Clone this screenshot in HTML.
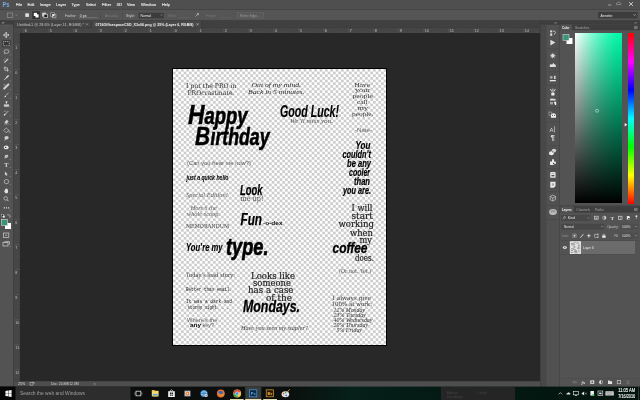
<!DOCTYPE html>
<html lang="en">
<head>
<meta charset="utf-8">
<title>Photoshop - Officespace printables</title>
<style>

html,body{margin:0;padding:0;background:#282828;}
body{width:640px;height:400px;overflow:hidden;font-family:'Liberation Sans',sans-serif;}
#app{position:relative;width:640px;height:400px;overflow:hidden;background:#282828;}
svg{position:absolute;left:0;top:0;overflow:visible;will-change:transform;}
#app div{position:absolute;box-sizing:border-box;}
svg text{white-space:pre;}
#menubar{left:0;top:0;width:640px;height:9px;background:#4f4f4f;}
#optbar{left:0;top:9px;width:640px;height:12px;background:#555555;box-shadow:inset 0 1px 0 #454545, inset 0 -1px 0 #414141;}
#tools{left:0;top:21px;width:14px;height:366px;background:#535353;box-shadow:inset -1px 0 0 #404040;}
#tabs{left:14px;top:21px;width:526px;height:7px;background:#424242;}
#hruler{left:14px;top:28px;width:526px;height:5px;background:#484848;}
#vruler{left:14px;top:33px;width:6px;height:348px;background:#484848;}
#canvas{left:20px;top:33px;width:520px;height:348px;background:#282828;}
#doc{left:172px;top:68px;width:215px;height:278px;background:#000;}
#status{left:14px;top:381px;width:526px;height:6px;background:#4e4e4e;}
#dock{left:540px;top:21px;width:20px;height:366px;background:#535353;}
#panels{left:560px;top:21px;width:80px;height:366px;background:#535353;}
#picker{left:15px;top:12px;width:47px;height:170px;background:linear-gradient(to bottom,rgba(0,0,0,0.000) 0.0%,rgba(0,0,0,0.081) 8.3%,rgba(0,0,0,0.162) 16.7%,rgba(0,0,0,0.243) 25.0%,rgba(0,0,0,0.325) 33.3%,rgba(0,0,0,0.407) 41.7%,rgba(0,0,0,0.489) 50.0%,rgba(0,0,0,0.572) 58.3%,rgba(0,0,0,0.655) 66.7%,rgba(0,0,0,0.739) 75.0%,rgba(0,0,0,0.824) 83.3%,rgba(0,0,0,0.910) 91.7%,rgba(0,0,0,1.000) 100.0%),linear-gradient(to right,rgb(255,255,255) 0.0%,rgb(224,254,244) 8.3%,rgb(194,254,234) 16.7%,rgb(166,253,225) 25.0%,rgb(139,253,215) 33.3%,rgb(114,252,207) 41.7%,rgb(90,252,199) 50.0%,rgb(69,251,191) 58.3%,rgb(49,251,185) 66.7%,rgb(32,251,179) 75.0%,rgb(17,250,174) 83.3%,rgb(6,250,170) 91.7%,rgb(0,250,168) 100.0%);}
#huebar{left:68px;top:12px;width:6.4px;height:170.5px;background:linear-gradient(to bottom,#f00 0%,#f0f 16.67%,#00f 33.33%,#0ff 50%,#0f0 66.67%,#ff0 83.33%,#f00 100%);}
#taskbar{left:0;top:387px;width:640px;height:13px;background:#0d0d0d;}

</style>
</head>
<body>
<div id="app">
<div id="menubar"><svg width="640" height="9" viewBox="0 0 640 9"><text x="2.50" y="7.00" font-size="7" font-family="'Liberation Sans', sans-serif" fill="#74a9dd" font-weight="bold" font-style="normal" textLength="7.00" lengthAdjust="spacingAndGlyphs">Ps</text><text x="16.00" y="6.20" font-size="4.4" font-family="'Liberation Sans', sans-serif" fill="#f0f0f0" font-weight="normal" font-style="normal" textLength="6.20" lengthAdjust="spacingAndGlyphs" stroke="#f0f0f0" stroke-width="0.1">File</text><text x="27.50" y="6.20" font-size="4.4" font-family="'Liberation Sans', sans-serif" fill="#f0f0f0" font-weight="normal" font-style="normal" textLength="7.00" lengthAdjust="spacingAndGlyphs" stroke="#f0f0f0" stroke-width="0.1">Edit</text><text x="40.00" y="6.20" font-size="4.4" font-family="'Liberation Sans', sans-serif" fill="#f0f0f0" font-weight="normal" font-style="normal" textLength="10.50" lengthAdjust="spacingAndGlyphs" stroke="#f0f0f0" stroke-width="0.1">Image</text><text x="56.00" y="6.20" font-size="4.4" font-family="'Liberation Sans', sans-serif" fill="#f0f0f0" font-weight="normal" font-style="normal" textLength="10.00" lengthAdjust="spacingAndGlyphs" stroke="#f0f0f0" stroke-width="0.1">Layer</text><text x="71.50" y="6.20" font-size="4.4" font-family="'Liberation Sans', sans-serif" fill="#f0f0f0" font-weight="normal" font-style="normal" textLength="8.00" lengthAdjust="spacingAndGlyphs" stroke="#f0f0f0" stroke-width="0.1">Type</text><text x="86.00" y="6.20" font-size="4.4" font-family="'Liberation Sans', sans-serif" fill="#f0f0f0" font-weight="normal" font-style="normal" textLength="10.00" lengthAdjust="spacingAndGlyphs" stroke="#f0f0f0" stroke-width="0.1">Select</text><text x="102.00" y="6.20" font-size="4.4" font-family="'Liberation Sans', sans-serif" fill="#f0f0f0" font-weight="normal" font-style="normal" textLength="9.00" lengthAdjust="spacingAndGlyphs" stroke="#f0f0f0" stroke-width="0.1">Filter</text><text x="116.50" y="6.20" font-size="4.4" font-family="'Liberation Sans', sans-serif" fill="#f0f0f0" font-weight="normal" font-style="normal" textLength="5.50" lengthAdjust="spacingAndGlyphs" stroke="#f0f0f0" stroke-width="0.1">3D</text><text x="127.00" y="6.20" font-size="4.4" font-family="'Liberation Sans', sans-serif" fill="#f0f0f0" font-weight="normal" font-style="normal" textLength="8.00" lengthAdjust="spacingAndGlyphs" stroke="#f0f0f0" stroke-width="0.1">View</text><text x="141.00" y="6.20" font-size="4.4" font-family="'Liberation Sans', sans-serif" fill="#f0f0f0" font-weight="normal" font-style="normal" textLength="15.00" lengthAdjust="spacingAndGlyphs" stroke="#f0f0f0" stroke-width="0.1">Window</text><text x="162.00" y="6.20" font-size="4.4" font-family="'Liberation Sans', sans-serif" fill="#f0f0f0" font-weight="normal" font-style="normal" textLength="8.00" lengthAdjust="spacingAndGlyphs" stroke="#f0f0f0" stroke-width="0.1">Help</text><rect x="608" y="4.6" width="3.4" height="0.8" fill="#b0b0b0"/><path d="M616.4 4.6 l4.4 0 q0.6 -1.4 -0.8 -1.8 q-0.8 -1.4 -2.2 -0.4 q-1.4 0.2 -1.4 2.2z" fill="none" stroke="#a8a8a8" stroke-width="0.6"/><path d="M629 2 l4 4 m0 -4 l-4 4" stroke="#ddd" stroke-width="0.8" fill="none"/></svg></div>
<div id="optbar"><svg width="640" height="12" viewBox="0 9 640 12"><rect x="7.2" y="13" width="5.6" height="4.4" fill="none" stroke="#a8a8a8" stroke-width="0.5"/><path d="M15.3 14.6 l1 1 l1 -1" stroke="#aaa" stroke-width="0.5" fill="none"/><rect x="25.3" y="13.3" width="3.6" height="3.6" fill="#e2e2e2"/><rect x="32.3" y="11.3" width="7.6" height="7.6" fill="#2e2e2e"/><rect x="33.8" y="12.8" width="3.2" height="3.2" fill="#fff"/><rect x="35.4" y="14.3" width="3.2" height="3.2" fill="#fff"/><rect x="42.2" y="12.7" width="3.8" height="3.8" fill="#dadada"/><rect x="43.9" y="14.2" width="3.5" height="3.5" fill="#1c1c1c" stroke="#d4d4d4" stroke-width="0.7"/><rect x="50.8" y="12.8" width="3.5" height="3.5" fill="#3a3a3a" stroke="#c8c8c8" stroke-width="0.6"/><rect x="52.4" y="14.3" width="3.5" height="3.5" fill="#3a3a3a" stroke="#c8c8c8" stroke-width="0.6"/><rect x="52.4" y="14.3" width="2.1" height="2.1" fill="#f4f4f4"/><text x="65.00" y="16.60" font-size="4.3" font-family="'Liberation Sans', sans-serif" fill="#d0d0d0" font-weight="normal" font-style="normal" textLength="11.50" lengthAdjust="spacingAndGlyphs">Feather:</text><rect x="79" y="17.6" width="18.5" height="0.45" fill="#9a9a9a"/><rect x="100.5" y="11.5" width="0.4" height="8" fill="#474747"/><rect x="122" y="11.5" width="0.4" height="8" fill="#474747"/><text x="79.80" y="16.60" font-size="4.3" font-family="'Liberation Sans', sans-serif" fill="#e0e0e0" font-weight="normal" font-style="normal" textLength="6.70" lengthAdjust="spacingAndGlyphs">0 px</text><text x="105.00" y="16.60" font-size="4.3" font-family="'Liberation Sans', sans-serif" fill="#7d7d7d" font-weight="normal" font-style="normal" textLength="13.00" lengthAdjust="spacingAndGlyphs">Anti-alias</text><text x="126.00" y="16.60" font-size="4.3" font-family="'Liberation Sans', sans-serif" fill="#d0d0d0" font-weight="normal" font-style="normal" textLength="9.00" lengthAdjust="spacingAndGlyphs">Style:</text><rect x="138.6" y="12.8" width="25.2" height="5.6" fill="#3c3c3c"/><text x="140.50" y="16.60" font-size="4.3" font-family="'Liberation Sans', sans-serif" fill="#f0f0f0" font-weight="normal" font-style="normal" textLength="10.70" lengthAdjust="spacingAndGlyphs">Normal</text><path d="M160.5 14.6 l1 1 l1 -1" stroke="#aaa" stroke-width="0.5" fill="none"/><text x="168.00" y="16.60" font-size="4.3" font-family="'Liberation Sans', sans-serif" fill="#777" font-weight="normal" font-style="normal" textLength="8.50" lengthAdjust="spacingAndGlyphs">Width:</text><rect x="178" y="17.6" width="12" height="0.5" fill="#666"/><path d="M195.5 16.5 l3 -3 m-0.2 1.8 l0.2 -1.8 l-1.8 0.2" stroke="#ccc" stroke-width="0.6" fill="none"/><text x="206.00" y="16.60" font-size="4.3" font-family="'Liberation Sans', sans-serif" fill="#777" font-weight="normal" font-style="normal" textLength="11.00" lengthAdjust="spacingAndGlyphs">Height:</text><rect x="219" y="17.6" width="12" height="0.5" fill="#666"/><rect x="237.5" y="12.6" width="26" height="5.4" fill="#585858" stroke="#6a6a6a" stroke-width="0.5"/><text x="240.00" y="16.60" font-size="4.2" font-family="'Liberation Sans', sans-serif" fill="#9a9a9a" font-weight="normal" font-style="normal" textLength="19.50" lengthAdjust="spacingAndGlyphs">Refine Edge...</text><rect x="598" y="12" width="39.5" height="6.4" fill="#3d3d3d"/><text x="600.50" y="16.60" font-size="4.3" font-family="'Liberation Sans', sans-serif" fill="#e8e8e8" font-weight="normal" font-style="normal" textLength="12.00" lengthAdjust="spacingAndGlyphs">Annette</text><path d="M633.5 14.3 l1.1 1.2 l1.1 -1.2" stroke="#ccc" stroke-width="0.6" fill="none"/></svg></div>
<div id="tools"><svg width="14" height="366" viewBox="0 21 14 366"><rect x="0" y="21" width="14" height="3.5" fill="#3e3e3e"/><path d="M2 22 l0.8 0.8 l-0.8 0.8 M3.3 22 l0.8 0.8 l-0.8 0.8" stroke="#d8d8d8" stroke-width="0.5" fill="none"/><rect x="3" y="25.6" width="7" height="0.4" fill="#666"/><g transform="translate(6.3 35) scale(0.82) translate(-6.3 -35)"><path d="M6.2 32 l0 6 M3.2 35 l6 0 M6.2 31.6 l-1 1.3 l2 0 z M6.2 38.4 l-1 -1.3 l2 0 z M2.8 35 l1.3 -1 l0 2 z M9.6 35 l-1.3 -1 l0 2 z" stroke="#cfcfcf" stroke-width="0.8" fill="#cfcfcf"/></g><path d="M10.5 38.3 l0 -1 l-1 1 z" fill="#b4b4b4"/><rect x="2" y="40.2" width="8.8" height="7" rx="0.5" fill="#363636"/><rect x="3.3" y="41.6" width="6" height="4.2" fill="none" stroke="#e4e4e4" stroke-width="0.6" stroke-dasharray="1.2 0.6"/><path d="M10.5 46.8 l0 -1 l-1 1 z" fill="#b4b4b4"/><g transform="translate(6.3 52) scale(0.82) translate(-6.3 -52)"><ellipse cx="6.6" cy="51.4" rx="3" ry="2.2" fill="none" stroke="#cfcfcf" stroke-width="0.8"/><path d="M4.6 53 l-0.6 1.8" stroke="#cfcfcf" stroke-width="0.8"/></g><path d="M10.5 55.3 l0 -1 l-1 1 z" fill="#b4b4b4"/><g transform="translate(6.3 60.5) scale(0.82) translate(-6.3 -60.5)"><path d="M4 63 l4.6 -4.6" stroke="#cfcfcf" stroke-width="1.3"/><ellipse cx="5" cy="59.6" rx="1.8" ry="1.6" fill="none" stroke="#cfcfcf" stroke-width="0.5" stroke-dasharray="0.8 0.5"/></g><path d="M10.5 63.8 l0 -1 l-1 1 z" fill="#b4b4b4"/><g transform="translate(6.3 69) scale(0.82) translate(-6.3 -69)"><path d="M4.6 66 l0 4.6 l4.8 0 M3 67.6 l4.8 0 l0 4.6" stroke="#cfcfcf" stroke-width="0.9" fill="none"/></g><path d="M10.5 72.3 l0 -1 l-1 1 z" fill="#b4b4b4"/><g transform="translate(6.3 78) scale(0.82) translate(-6.3 -78)"><path d="M3.6 80.6 l3.2 -3.2" stroke="#cfcfcf" stroke-width="1.1"/><path d="M6.6 77.4 l2 -2" stroke="#cfcfcf" stroke-width="1.9" stroke-linecap="round"/></g><path d="M10.5 81.3 l0 -1 l-1 1 z" fill="#b4b4b4"/><g transform="translate(6.3 86.5) scale(0.82) translate(-6.3 -86.5)"><path d="M3.8 89 l5 -5" stroke="#cfcfcf" stroke-width="2.5" stroke-linecap="round"/><circle cx="4" cy="84.6" r="0.9" fill="none" stroke="#cfcfcf" stroke-width="0.4"/></g><path d="M10.5 89.8 l0 -1 l-1 1 z" fill="#b4b4b4"/><g transform="translate(6.3 95.5) scale(0.82) translate(-6.3 -95.5)"><path d="M6 95.4 l3 -3.2" stroke="#cfcfcf" stroke-width="0.9"/><path d="M3.8 98 q0.4 -2.2 2.2 -2.4 q0.8 1.6 -2.2 2.4z" fill="#f0f0f0"/></g><path d="M10.5 98.8 l0 -1 l-1 1 z" fill="#b4b4b4"/><g transform="translate(6.3 104) scale(0.82) translate(-6.3 -104)"><path d="M6.5 101 l0 3 M3.6 105 l5.8 0 l0 1 l-5.8 0z M3.6 107 l5.8 0" stroke="#cfcfcf" stroke-width="0.9" fill="#cfcfcf"/><circle cx="6.5" cy="101.6" r="1.2" fill="#cfcfcf"/></g><path d="M10.5 107.3 l0 -1 l-1 1 z" fill="#b4b4b4"/><g transform="translate(6.3 113) scale(0.82) translate(-6.3 -113)"><path d="M4 115.6 l4.8 -5" stroke="#cfcfcf" stroke-width="1"/><path d="M3.4 111.4 q1.4 -1.6 3 -0.6" stroke="#cfcfcf" stroke-width="0.6" fill="none"/><path d="M3.6 116 l1.4 -1.6" stroke="#f0f0f0" stroke-width="1.4"/></g><path d="M10.5 116.3 l0 -1 l-1 1 z" fill="#b4b4b4"/><g transform="translate(6.3 121.5) scale(0.82) translate(-6.3 -121.5)"><path d="M4 122.4 l3 -3 l2.2 2.2 l-3 3 z" fill="#cfcfcf"/><path d="M3.4 124.6 l6 0" stroke="#cfcfcf" stroke-width="0.6"/></g><path d="M10.5 124.8 l0 -1 l-1 1 z" fill="#b4b4b4"/><g transform="translate(6.3 130) scale(0.82) translate(-6.3 -130)"><path d="M3.2 130.4 l3 -3 l3 3 l-3 3 z" fill="none" stroke="#cfcfcf" stroke-width="0.8"/><path d="M8.8 130 q1.6 1.6 1 3.2" stroke="#cfcfcf" stroke-width="0.9" fill="none"/></g><path d="M10.5 133.3 l0 -1 l-1 1 z" fill="#b4b4b4"/><g transform="translate(6.3 138.5) scale(0.82) translate(-6.3 -138.5)"><ellipse cx="6.6" cy="137.6" rx="2.6" ry="2" fill="#cfcfcf"/><path d="M4.4 141 l1.4 -2.4" stroke="#cfcfcf" stroke-width="1.1"/></g><path d="M10.5 141.8 l0 -1 l-1 1 z" fill="#b4b4b4"/><g transform="translate(6.3 147.5) scale(0.82) translate(-6.3 -147.5)"><ellipse cx="6.2" cy="147.4" rx="3" ry="2.3" fill="#e4e4e4"/><circle cx="5.6" cy="147.4" r="0.8" fill="#222"/></g><path d="M10.5 150.8 l0 -1 l-1 1 z" fill="#b4b4b4"/><g transform="translate(6.3 156.5) scale(0.82) translate(-6.3 -156.5)"><path d="M4.2 159 l0.4 -3.4 q1.6 -2 3.6 -1 l0.6 1.6 q-1 2 -4.6 2.8z" fill="#cfcfcf"/><path d="M5.2 158 q1 -1.6 2.4 -2" stroke="#555" stroke-width="0.4" fill="none"/></g><path d="M10.5 159.8 l0 -1 l-1 1 z" fill="#b4b4b4"/><text x="4.30" y="166.80" font-size="6.6" font-family="'Liberation Serif', serif" fill="#dcdcdc" font-weight="bold" font-style="normal" textLength="4.20" lengthAdjust="spacingAndGlyphs">T</text><path d="M10.5 167.8 l0 -1 l-1 1 z" fill="#b4b4b4"/><g transform="translate(6.3 173.5) scale(0.82) translate(-6.3 -173.5)"><path d="M4.6 171 l3.6 3.4 l-1.6 0.2 l0.8 1.6 l-0.8 0.4 l-0.8 -1.6 l-1.2 1 z" fill="#cfcfcf"/></g><path d="M10.5 176.8 l0 -1 l-1 1 z" fill="#b4b4b4"/><g transform="translate(6.3 181.5) scale(0.82) translate(-6.3 -181.5)"><ellipse cx="6.5" cy="181.6" rx="2.8" ry="2.6" fill="none" stroke="#cfcfcf" stroke-width="0.8"/></g><path d="M10.5 184.8 l0 -1 l-1 1 z" fill="#b4b4b4"/><g transform="translate(6.3 190.5) scale(0.82) translate(-6.3 -190.5)"><path d="M4.4 192.6 l-1 -1.8 l1 -0.4 l0.4 0.6 l0 -2.4 l0.9 0 l0 -0.6 l0.9 0 l0 0.5 l0.9 0 l0 0.7 l0.9 0 l0 3.4 l-0.8 1.4 l-2.6 0 z" fill="#e0e0e0"/></g><path d="M10.5 193.8 l0 -1 l-1 1 z" fill="#b4b4b4"/><g transform="translate(6.3 199.3) scale(0.82) translate(-6.3 -199.3)"><circle cx="5.6" cy="198.2" r="2.2" fill="none" stroke="#cfcfcf" stroke-width="0.8"/><path d="M7.2 199.8 l1.8 1.8" stroke="#cfcfcf" stroke-width="1.1"/></g><rect x="3.8" y="207.2" width="1.2" height="1.3" fill="#cfcfcf"/><rect x="5.9" y="207.2" width="1.2" height="1.3" fill="#cfcfcf"/><rect x="8" y="207.2" width="1.2" height="1.3" fill="#cfcfcf"/><path d="M10.5 210.8 l0 -1 l-1 1 z" fill="#b4b4b4"/><rect x="1.6" y="214.4" width="2.2" height="2.2" fill="#111" stroke="#ddd" stroke-width="0.4"/><rect x="2.8" y="215.6" width="2" height="2" fill="#eee"/><path d="M7.6 214.8 l2.4 0 l0 2.4 M10 217.4 l-0.8 -0.8 m0.8 0.8 l0.8 -0.8 M7.4 214.8 l0.8 -0.8 m-0.8 0.8 l0.8 0.8" stroke="#ccc" stroke-width="0.45" fill="none"/><rect x="5" y="223" width="6" height="6" fill="#ffffff"/><rect x="1.5" y="219.5" width="6" height="6" fill="#38957a" stroke="#d8d8d8" stroke-width="0.6"/><rect x="3.4" y="233" width="5.4" height="4.4" fill="none" stroke="#cfcfcf" stroke-width="0.7"/><rect x="5" y="234.3" width="2.2" height="1.8" fill="#888"/><rect x="3" y="242.6" width="5" height="3.4" fill="none" stroke="#cfcfcf" stroke-width="0.7"/><path d="M4.4 241.6 l5 0 l0 3.2" stroke="#cfcfcf" stroke-width="0.7" fill="none"/><path d="M10.5 246.8 l0 -1 l-1 1 z" fill="#b4b4b4"/></svg></div>
<div id="tabs"><svg width="526" height="7" viewBox="14 21 526 7"><rect x="14" y="21" width="526" height="7" fill="#404040"/><rect x="14" y="21" width="77.5" height="6.6" fill="#444444"/><rect x="91.5" y="21" width="0.6" height="7" fill="#333"/><rect x="92" y="21" width="109.5" height="7" fill="#484848"/><rect x="201.5" y="21" width="0.6" height="7" fill="#333"/><text x="17.00" y="25.50" font-size="4.2" font-family="'Liberation Sans', sans-serif" fill="#c4c4c4" font-weight="normal" font-style="normal" textLength="67.00" lengthAdjust="spacingAndGlyphs">Untitled-1 @ 28.6% (Layer 11, RGB/8) *</text><path d="M86 23.3 l2 2 m0 -2 l-2 2" stroke="#b0b0b0" stroke-width="0.5" fill="none"/><text x="95.50" y="25.60" font-size="4.2" font-family="'Liberation Sans', sans-serif" fill="#f2f2f2" font-weight="bold" font-style="normal" textLength="98.00" lengthAdjust="spacingAndGlyphs">0716OfficespaceCSD_X3x06.png @ 25% (Layer 6, RGB/8)</text><path d="M196.5 23.3 l2 2 m0 -2 l-2 2" stroke="#ddd" stroke-width="0.5" fill="none"/></svg></div>
<div id="hruler"><svg width="526" height="5" viewBox="14 28 526 5"><rect x="14" y="28" width="526" height="5" fill="#464646"/><rect x="14" y="27.6" width="526" height="0.5" fill="#3e3e3e"/><rect x="14" y="28" width="6" height="5" fill="#494949"/><rect x="23.75" y="28.3" width="0.4" height="4.7" fill="#6c6c6c"/><rect x="36.25" y="31.4" width="0.35" height="1.6" fill="#6c6c6c"/><rect x="30.00" y="32.2" width="0.3" height="0.8" fill="#626262"/><rect x="42.50" y="32.2" width="0.3" height="0.8" fill="#626262"/><rect x="26.88" y="32.4" width="0.3" height="0.6" fill="#585858"/><rect x="33.12" y="32.4" width="0.3" height="0.6" fill="#585858"/><rect x="39.38" y="32.4" width="0.3" height="0.6" fill="#585858"/><rect x="45.62" y="32.4" width="0.3" height="0.6" fill="#585858"/><text x="24.75" y="32.20" font-size="4.1" font-family="'Liberation Sans', sans-serif" fill="#c0c0c0" font-weight="normal" font-style="normal" textLength="2.10" lengthAdjust="spacingAndGlyphs">6</text><rect x="48.75" y="28.3" width="0.4" height="4.7" fill="#6c6c6c"/><rect x="61.25" y="31.4" width="0.35" height="1.6" fill="#6c6c6c"/><rect x="55.00" y="32.2" width="0.3" height="0.8" fill="#626262"/><rect x="67.50" y="32.2" width="0.3" height="0.8" fill="#626262"/><rect x="51.88" y="32.4" width="0.3" height="0.6" fill="#585858"/><rect x="58.12" y="32.4" width="0.3" height="0.6" fill="#585858"/><rect x="64.38" y="32.4" width="0.3" height="0.6" fill="#585858"/><rect x="70.62" y="32.4" width="0.3" height="0.6" fill="#585858"/><text x="49.75" y="32.20" font-size="4.1" font-family="'Liberation Sans', sans-serif" fill="#c0c0c0" font-weight="normal" font-style="normal" textLength="2.10" lengthAdjust="spacingAndGlyphs">5</text><rect x="73.75" y="28.3" width="0.4" height="4.7" fill="#6c6c6c"/><rect x="86.25" y="31.4" width="0.35" height="1.6" fill="#6c6c6c"/><rect x="80.00" y="32.2" width="0.3" height="0.8" fill="#626262"/><rect x="92.50" y="32.2" width="0.3" height="0.8" fill="#626262"/><rect x="76.88" y="32.4" width="0.3" height="0.6" fill="#585858"/><rect x="83.12" y="32.4" width="0.3" height="0.6" fill="#585858"/><rect x="89.38" y="32.4" width="0.3" height="0.6" fill="#585858"/><rect x="95.62" y="32.4" width="0.3" height="0.6" fill="#585858"/><text x="74.75" y="32.20" font-size="4.1" font-family="'Liberation Sans', sans-serif" fill="#c0c0c0" font-weight="normal" font-style="normal" textLength="2.10" lengthAdjust="spacingAndGlyphs">4</text><rect x="98.75" y="28.3" width="0.4" height="4.7" fill="#6c6c6c"/><rect x="111.25" y="31.4" width="0.35" height="1.6" fill="#6c6c6c"/><rect x="105.00" y="32.2" width="0.3" height="0.8" fill="#626262"/><rect x="117.50" y="32.2" width="0.3" height="0.8" fill="#626262"/><rect x="101.88" y="32.4" width="0.3" height="0.6" fill="#585858"/><rect x="108.12" y="32.4" width="0.3" height="0.6" fill="#585858"/><rect x="114.38" y="32.4" width="0.3" height="0.6" fill="#585858"/><rect x="120.62" y="32.4" width="0.3" height="0.6" fill="#585858"/><text x="99.75" y="32.20" font-size="4.1" font-family="'Liberation Sans', sans-serif" fill="#c0c0c0" font-weight="normal" font-style="normal" textLength="2.10" lengthAdjust="spacingAndGlyphs">3</text><rect x="123.75" y="28.3" width="0.4" height="4.7" fill="#6c6c6c"/><rect x="136.25" y="31.4" width="0.35" height="1.6" fill="#6c6c6c"/><rect x="130.00" y="32.2" width="0.3" height="0.8" fill="#626262"/><rect x="142.50" y="32.2" width="0.3" height="0.8" fill="#626262"/><rect x="126.88" y="32.4" width="0.3" height="0.6" fill="#585858"/><rect x="133.12" y="32.4" width="0.3" height="0.6" fill="#585858"/><rect x="139.38" y="32.4" width="0.3" height="0.6" fill="#585858"/><rect x="145.62" y="32.4" width="0.3" height="0.6" fill="#585858"/><text x="124.75" y="32.20" font-size="4.1" font-family="'Liberation Sans', sans-serif" fill="#c0c0c0" font-weight="normal" font-style="normal" textLength="2.10" lengthAdjust="spacingAndGlyphs">2</text><rect x="148.75" y="28.3" width="0.4" height="4.7" fill="#6c6c6c"/><rect x="161.25" y="31.4" width="0.35" height="1.6" fill="#6c6c6c"/><rect x="155.00" y="32.2" width="0.3" height="0.8" fill="#626262"/><rect x="167.50" y="32.2" width="0.3" height="0.8" fill="#626262"/><rect x="151.88" y="32.4" width="0.3" height="0.6" fill="#585858"/><rect x="158.12" y="32.4" width="0.3" height="0.6" fill="#585858"/><rect x="164.38" y="32.4" width="0.3" height="0.6" fill="#585858"/><rect x="170.62" y="32.4" width="0.3" height="0.6" fill="#585858"/><text x="149.75" y="32.20" font-size="4.1" font-family="'Liberation Sans', sans-serif" fill="#c0c0c0" font-weight="normal" font-style="normal" textLength="2.10" lengthAdjust="spacingAndGlyphs">1</text><rect x="173.75" y="28.3" width="0.4" height="4.7" fill="#6c6c6c"/><rect x="186.25" y="31.4" width="0.35" height="1.6" fill="#6c6c6c"/><rect x="180.00" y="32.2" width="0.3" height="0.8" fill="#626262"/><rect x="192.50" y="32.2" width="0.3" height="0.8" fill="#626262"/><rect x="176.88" y="32.4" width="0.3" height="0.6" fill="#585858"/><rect x="183.12" y="32.4" width="0.3" height="0.6" fill="#585858"/><rect x="189.38" y="32.4" width="0.3" height="0.6" fill="#585858"/><rect x="195.62" y="32.4" width="0.3" height="0.6" fill="#585858"/><text x="174.75" y="32.20" font-size="4.1" font-family="'Liberation Sans', sans-serif" fill="#c0c0c0" font-weight="normal" font-style="normal" textLength="2.10" lengthAdjust="spacingAndGlyphs">0</text><rect x="198.75" y="28.3" width="0.4" height="4.7" fill="#6c6c6c"/><rect x="211.25" y="31.4" width="0.35" height="1.6" fill="#6c6c6c"/><rect x="205.00" y="32.2" width="0.3" height="0.8" fill="#626262"/><rect x="217.50" y="32.2" width="0.3" height="0.8" fill="#626262"/><rect x="201.88" y="32.4" width="0.3" height="0.6" fill="#585858"/><rect x="208.12" y="32.4" width="0.3" height="0.6" fill="#585858"/><rect x="214.38" y="32.4" width="0.3" height="0.6" fill="#585858"/><rect x="220.62" y="32.4" width="0.3" height="0.6" fill="#585858"/><text x="199.75" y="32.20" font-size="4.1" font-family="'Liberation Sans', sans-serif" fill="#c0c0c0" font-weight="normal" font-style="normal" textLength="2.10" lengthAdjust="spacingAndGlyphs">1</text><rect x="223.75" y="28.3" width="0.4" height="4.7" fill="#6c6c6c"/><rect x="236.25" y="31.4" width="0.35" height="1.6" fill="#6c6c6c"/><rect x="230.00" y="32.2" width="0.3" height="0.8" fill="#626262"/><rect x="242.50" y="32.2" width="0.3" height="0.8" fill="#626262"/><rect x="226.88" y="32.4" width="0.3" height="0.6" fill="#585858"/><rect x="233.12" y="32.4" width="0.3" height="0.6" fill="#585858"/><rect x="239.38" y="32.4" width="0.3" height="0.6" fill="#585858"/><rect x="245.62" y="32.4" width="0.3" height="0.6" fill="#585858"/><text x="224.75" y="32.20" font-size="4.1" font-family="'Liberation Sans', sans-serif" fill="#c0c0c0" font-weight="normal" font-style="normal" textLength="2.10" lengthAdjust="spacingAndGlyphs">2</text><rect x="248.75" y="28.3" width="0.4" height="4.7" fill="#6c6c6c"/><rect x="261.25" y="31.4" width="0.35" height="1.6" fill="#6c6c6c"/><rect x="255.00" y="32.2" width="0.3" height="0.8" fill="#626262"/><rect x="267.50" y="32.2" width="0.3" height="0.8" fill="#626262"/><rect x="251.88" y="32.4" width="0.3" height="0.6" fill="#585858"/><rect x="258.12" y="32.4" width="0.3" height="0.6" fill="#585858"/><rect x="264.38" y="32.4" width="0.3" height="0.6" fill="#585858"/><rect x="270.62" y="32.4" width="0.3" height="0.6" fill="#585858"/><text x="249.75" y="32.20" font-size="4.1" font-family="'Liberation Sans', sans-serif" fill="#c0c0c0" font-weight="normal" font-style="normal" textLength="2.10" lengthAdjust="spacingAndGlyphs">3</text><rect x="273.75" y="28.3" width="0.4" height="4.7" fill="#6c6c6c"/><rect x="286.25" y="31.4" width="0.35" height="1.6" fill="#6c6c6c"/><rect x="280.00" y="32.2" width="0.3" height="0.8" fill="#626262"/><rect x="292.50" y="32.2" width="0.3" height="0.8" fill="#626262"/><rect x="276.88" y="32.4" width="0.3" height="0.6" fill="#585858"/><rect x="283.12" y="32.4" width="0.3" height="0.6" fill="#585858"/><rect x="289.38" y="32.4" width="0.3" height="0.6" fill="#585858"/><rect x="295.62" y="32.4" width="0.3" height="0.6" fill="#585858"/><text x="274.75" y="32.20" font-size="4.1" font-family="'Liberation Sans', sans-serif" fill="#c0c0c0" font-weight="normal" font-style="normal" textLength="2.10" lengthAdjust="spacingAndGlyphs">4</text><rect x="298.75" y="28.3" width="0.4" height="4.7" fill="#6c6c6c"/><rect x="311.25" y="31.4" width="0.35" height="1.6" fill="#6c6c6c"/><rect x="305.00" y="32.2" width="0.3" height="0.8" fill="#626262"/><rect x="317.50" y="32.2" width="0.3" height="0.8" fill="#626262"/><rect x="301.88" y="32.4" width="0.3" height="0.6" fill="#585858"/><rect x="308.12" y="32.4" width="0.3" height="0.6" fill="#585858"/><rect x="314.38" y="32.4" width="0.3" height="0.6" fill="#585858"/><rect x="320.62" y="32.4" width="0.3" height="0.6" fill="#585858"/><text x="299.75" y="32.20" font-size="4.1" font-family="'Liberation Sans', sans-serif" fill="#c0c0c0" font-weight="normal" font-style="normal" textLength="2.10" lengthAdjust="spacingAndGlyphs">5</text><rect x="323.75" y="28.3" width="0.4" height="4.7" fill="#6c6c6c"/><rect x="336.25" y="31.4" width="0.35" height="1.6" fill="#6c6c6c"/><rect x="330.00" y="32.2" width="0.3" height="0.8" fill="#626262"/><rect x="342.50" y="32.2" width="0.3" height="0.8" fill="#626262"/><rect x="326.88" y="32.4" width="0.3" height="0.6" fill="#585858"/><rect x="333.12" y="32.4" width="0.3" height="0.6" fill="#585858"/><rect x="339.38" y="32.4" width="0.3" height="0.6" fill="#585858"/><rect x="345.62" y="32.4" width="0.3" height="0.6" fill="#585858"/><text x="324.75" y="32.20" font-size="4.1" font-family="'Liberation Sans', sans-serif" fill="#c0c0c0" font-weight="normal" font-style="normal" textLength="2.10" lengthAdjust="spacingAndGlyphs">6</text><rect x="348.75" y="28.3" width="0.4" height="4.7" fill="#6c6c6c"/><rect x="361.25" y="31.4" width="0.35" height="1.6" fill="#6c6c6c"/><rect x="355.00" y="32.2" width="0.3" height="0.8" fill="#626262"/><rect x="367.50" y="32.2" width="0.3" height="0.8" fill="#626262"/><rect x="351.88" y="32.4" width="0.3" height="0.6" fill="#585858"/><rect x="358.12" y="32.4" width="0.3" height="0.6" fill="#585858"/><rect x="364.38" y="32.4" width="0.3" height="0.6" fill="#585858"/><rect x="370.62" y="32.4" width="0.3" height="0.6" fill="#585858"/><text x="349.75" y="32.20" font-size="4.1" font-family="'Liberation Sans', sans-serif" fill="#c0c0c0" font-weight="normal" font-style="normal" textLength="2.10" lengthAdjust="spacingAndGlyphs">7</text><rect x="373.75" y="28.3" width="0.4" height="4.7" fill="#6c6c6c"/><rect x="386.25" y="31.4" width="0.35" height="1.6" fill="#6c6c6c"/><rect x="380.00" y="32.2" width="0.3" height="0.8" fill="#626262"/><rect x="392.50" y="32.2" width="0.3" height="0.8" fill="#626262"/><rect x="376.88" y="32.4" width="0.3" height="0.6" fill="#585858"/><rect x="383.12" y="32.4" width="0.3" height="0.6" fill="#585858"/><rect x="389.38" y="32.4" width="0.3" height="0.6" fill="#585858"/><rect x="395.62" y="32.4" width="0.3" height="0.6" fill="#585858"/><text x="374.75" y="32.20" font-size="4.1" font-family="'Liberation Sans', sans-serif" fill="#c0c0c0" font-weight="normal" font-style="normal" textLength="2.10" lengthAdjust="spacingAndGlyphs">8</text><rect x="398.75" y="28.3" width="0.4" height="4.7" fill="#6c6c6c"/><rect x="411.25" y="31.4" width="0.35" height="1.6" fill="#6c6c6c"/><rect x="405.00" y="32.2" width="0.3" height="0.8" fill="#626262"/><rect x="417.50" y="32.2" width="0.3" height="0.8" fill="#626262"/><rect x="401.88" y="32.4" width="0.3" height="0.6" fill="#585858"/><rect x="408.12" y="32.4" width="0.3" height="0.6" fill="#585858"/><rect x="414.38" y="32.4" width="0.3" height="0.6" fill="#585858"/><rect x="420.62" y="32.4" width="0.3" height="0.6" fill="#585858"/><text x="399.75" y="32.20" font-size="4.1" font-family="'Liberation Sans', sans-serif" fill="#c0c0c0" font-weight="normal" font-style="normal" textLength="2.10" lengthAdjust="spacingAndGlyphs">9</text><rect x="423.75" y="28.3" width="0.4" height="4.7" fill="#6c6c6c"/><rect x="436.25" y="31.4" width="0.35" height="1.6" fill="#6c6c6c"/><rect x="430.00" y="32.2" width="0.3" height="0.8" fill="#626262"/><rect x="442.50" y="32.2" width="0.3" height="0.8" fill="#626262"/><rect x="426.88" y="32.4" width="0.3" height="0.6" fill="#585858"/><rect x="433.12" y="32.4" width="0.3" height="0.6" fill="#585858"/><rect x="439.38" y="32.4" width="0.3" height="0.6" fill="#585858"/><rect x="445.62" y="32.4" width="0.3" height="0.6" fill="#585858"/><text x="424.75" y="32.20" font-size="4.1" font-family="'Liberation Sans', sans-serif" fill="#c0c0c0" font-weight="normal" font-style="normal" textLength="4.20" lengthAdjust="spacingAndGlyphs">10</text><rect x="448.75" y="28.3" width="0.4" height="4.7" fill="#6c6c6c"/><rect x="461.25" y="31.4" width="0.35" height="1.6" fill="#6c6c6c"/><rect x="455.00" y="32.2" width="0.3" height="0.8" fill="#626262"/><rect x="467.50" y="32.2" width="0.3" height="0.8" fill="#626262"/><rect x="451.88" y="32.4" width="0.3" height="0.6" fill="#585858"/><rect x="458.12" y="32.4" width="0.3" height="0.6" fill="#585858"/><rect x="464.38" y="32.4" width="0.3" height="0.6" fill="#585858"/><rect x="470.62" y="32.4" width="0.3" height="0.6" fill="#585858"/><text x="449.75" y="32.20" font-size="4.1" font-family="'Liberation Sans', sans-serif" fill="#c0c0c0" font-weight="normal" font-style="normal" textLength="4.20" lengthAdjust="spacingAndGlyphs">11</text><rect x="473.75" y="28.3" width="0.4" height="4.7" fill="#6c6c6c"/><rect x="486.25" y="31.4" width="0.35" height="1.6" fill="#6c6c6c"/><rect x="480.00" y="32.2" width="0.3" height="0.8" fill="#626262"/><rect x="492.50" y="32.2" width="0.3" height="0.8" fill="#626262"/><rect x="476.88" y="32.4" width="0.3" height="0.6" fill="#585858"/><rect x="483.12" y="32.4" width="0.3" height="0.6" fill="#585858"/><rect x="489.38" y="32.4" width="0.3" height="0.6" fill="#585858"/><rect x="495.62" y="32.4" width="0.3" height="0.6" fill="#585858"/><text x="474.75" y="32.20" font-size="4.1" font-family="'Liberation Sans', sans-serif" fill="#c0c0c0" font-weight="normal" font-style="normal" textLength="4.20" lengthAdjust="spacingAndGlyphs">12</text><rect x="498.75" y="28.3" width="0.4" height="4.7" fill="#6c6c6c"/><rect x="511.25" y="31.4" width="0.35" height="1.6" fill="#6c6c6c"/><rect x="505.00" y="32.2" width="0.3" height="0.8" fill="#626262"/><rect x="517.50" y="32.2" width="0.3" height="0.8" fill="#626262"/><rect x="501.88" y="32.4" width="0.3" height="0.6" fill="#585858"/><rect x="508.12" y="32.4" width="0.3" height="0.6" fill="#585858"/><rect x="514.38" y="32.4" width="0.3" height="0.6" fill="#585858"/><rect x="520.62" y="32.4" width="0.3" height="0.6" fill="#585858"/><text x="499.75" y="32.20" font-size="4.1" font-family="'Liberation Sans', sans-serif" fill="#c0c0c0" font-weight="normal" font-style="normal" textLength="4.20" lengthAdjust="spacingAndGlyphs">13</text><rect x="523.75" y="28.3" width="0.4" height="4.7" fill="#6c6c6c"/><rect x="536.25" y="31.4" width="0.35" height="1.6" fill="#6c6c6c"/><rect x="530.00" y="32.2" width="0.3" height="0.8" fill="#626262"/><rect x="542.50" y="32.2" width="0.3" height="0.8" fill="#626262"/><rect x="526.88" y="32.4" width="0.3" height="0.6" fill="#585858"/><rect x="533.12" y="32.4" width="0.3" height="0.6" fill="#585858"/><rect x="539.38" y="32.4" width="0.3" height="0.6" fill="#585858"/><rect x="545.62" y="32.4" width="0.3" height="0.6" fill="#585858"/><text x="524.75" y="32.20" font-size="4.1" font-family="'Liberation Sans', sans-serif" fill="#c0c0c0" font-weight="normal" font-style="normal" textLength="4.20" lengthAdjust="spacingAndGlyphs">14</text></svg></div>
<div id="vruler"><svg width="6" height="348" viewBox="14 33 6 348"><rect x="14" y="33" width="6" height="348" fill="#464646"/><rect x="19.6" y="33" width="0.5" height="348" fill="#3a3a3a"/><rect x="14.6" y="44.00" width="5" height="0.35" fill="#6a6a6a"/><rect x="18" y="56.50" width="1.6" height="0.35" fill="#6a6a6a"/><rect x="18.8" y="50.25" width="0.8" height="0.3" fill="#606060"/><rect x="18.8" y="62.75" width="0.8" height="0.3" fill="#606060"/><rect x="19" y="47.12" width="0.6" height="0.3" fill="#585858"/><rect x="19" y="53.38" width="0.6" height="0.3" fill="#585858"/><rect x="19" y="59.62" width="0.6" height="0.3" fill="#585858"/><rect x="19" y="65.88" width="0.6" height="0.3" fill="#585858"/><text x="15.20" y="49.40" font-size="4.1" font-family="'Liberation Sans', sans-serif" fill="#c0c0c0" font-weight="normal" font-style="normal" textLength="2.10" lengthAdjust="spacingAndGlyphs">1</text><rect x="14.6" y="69.00" width="5" height="0.35" fill="#6a6a6a"/><rect x="18" y="81.50" width="1.6" height="0.35" fill="#6a6a6a"/><rect x="18.8" y="75.25" width="0.8" height="0.3" fill="#606060"/><rect x="18.8" y="87.75" width="0.8" height="0.3" fill="#606060"/><rect x="19" y="72.12" width="0.6" height="0.3" fill="#585858"/><rect x="19" y="78.38" width="0.6" height="0.3" fill="#585858"/><rect x="19" y="84.62" width="0.6" height="0.3" fill="#585858"/><rect x="19" y="90.88" width="0.6" height="0.3" fill="#585858"/><text x="15.20" y="74.40" font-size="4.1" font-family="'Liberation Sans', sans-serif" fill="#c0c0c0" font-weight="normal" font-style="normal" textLength="2.10" lengthAdjust="spacingAndGlyphs">0</text><rect x="14.6" y="94.00" width="5" height="0.35" fill="#6a6a6a"/><rect x="18" y="106.50" width="1.6" height="0.35" fill="#6a6a6a"/><rect x="18.8" y="100.25" width="0.8" height="0.3" fill="#606060"/><rect x="18.8" y="112.75" width="0.8" height="0.3" fill="#606060"/><rect x="19" y="97.12" width="0.6" height="0.3" fill="#585858"/><rect x="19" y="103.38" width="0.6" height="0.3" fill="#585858"/><rect x="19" y="109.62" width="0.6" height="0.3" fill="#585858"/><rect x="19" y="115.88" width="0.6" height="0.3" fill="#585858"/><text x="15.20" y="99.40" font-size="4.1" font-family="'Liberation Sans', sans-serif" fill="#c0c0c0" font-weight="normal" font-style="normal" textLength="2.10" lengthAdjust="spacingAndGlyphs">1</text><rect x="14.6" y="119.00" width="5" height="0.35" fill="#6a6a6a"/><rect x="18" y="131.50" width="1.6" height="0.35" fill="#6a6a6a"/><rect x="18.8" y="125.25" width="0.8" height="0.3" fill="#606060"/><rect x="18.8" y="137.75" width="0.8" height="0.3" fill="#606060"/><rect x="19" y="122.12" width="0.6" height="0.3" fill="#585858"/><rect x="19" y="128.38" width="0.6" height="0.3" fill="#585858"/><rect x="19" y="134.62" width="0.6" height="0.3" fill="#585858"/><rect x="19" y="140.88" width="0.6" height="0.3" fill="#585858"/><text x="15.20" y="124.40" font-size="4.1" font-family="'Liberation Sans', sans-serif" fill="#c0c0c0" font-weight="normal" font-style="normal" textLength="2.10" lengthAdjust="spacingAndGlyphs">2</text><rect x="14.6" y="144.00" width="5" height="0.35" fill="#6a6a6a"/><rect x="18" y="156.50" width="1.6" height="0.35" fill="#6a6a6a"/><rect x="18.8" y="150.25" width="0.8" height="0.3" fill="#606060"/><rect x="18.8" y="162.75" width="0.8" height="0.3" fill="#606060"/><rect x="19" y="147.12" width="0.6" height="0.3" fill="#585858"/><rect x="19" y="153.38" width="0.6" height="0.3" fill="#585858"/><rect x="19" y="159.62" width="0.6" height="0.3" fill="#585858"/><rect x="19" y="165.88" width="0.6" height="0.3" fill="#585858"/><text x="15.20" y="149.40" font-size="4.1" font-family="'Liberation Sans', sans-serif" fill="#c0c0c0" font-weight="normal" font-style="normal" textLength="2.10" lengthAdjust="spacingAndGlyphs">3</text><rect x="14.6" y="169.00" width="5" height="0.35" fill="#6a6a6a"/><rect x="18" y="181.50" width="1.6" height="0.35" fill="#6a6a6a"/><rect x="18.8" y="175.25" width="0.8" height="0.3" fill="#606060"/><rect x="18.8" y="187.75" width="0.8" height="0.3" fill="#606060"/><rect x="19" y="172.12" width="0.6" height="0.3" fill="#585858"/><rect x="19" y="178.38" width="0.6" height="0.3" fill="#585858"/><rect x="19" y="184.62" width="0.6" height="0.3" fill="#585858"/><rect x="19" y="190.88" width="0.6" height="0.3" fill="#585858"/><text x="15.20" y="174.40" font-size="4.1" font-family="'Liberation Sans', sans-serif" fill="#c0c0c0" font-weight="normal" font-style="normal" textLength="2.10" lengthAdjust="spacingAndGlyphs">4</text><rect x="14.6" y="194.00" width="5" height="0.35" fill="#6a6a6a"/><rect x="18" y="206.50" width="1.6" height="0.35" fill="#6a6a6a"/><rect x="18.8" y="200.25" width="0.8" height="0.3" fill="#606060"/><rect x="18.8" y="212.75" width="0.8" height="0.3" fill="#606060"/><rect x="19" y="197.12" width="0.6" height="0.3" fill="#585858"/><rect x="19" y="203.38" width="0.6" height="0.3" fill="#585858"/><rect x="19" y="209.62" width="0.6" height="0.3" fill="#585858"/><rect x="19" y="215.88" width="0.6" height="0.3" fill="#585858"/><text x="15.20" y="199.40" font-size="4.1" font-family="'Liberation Sans', sans-serif" fill="#c0c0c0" font-weight="normal" font-style="normal" textLength="2.10" lengthAdjust="spacingAndGlyphs">5</text><rect x="14.6" y="219.00" width="5" height="0.35" fill="#6a6a6a"/><rect x="18" y="231.50" width="1.6" height="0.35" fill="#6a6a6a"/><rect x="18.8" y="225.25" width="0.8" height="0.3" fill="#606060"/><rect x="18.8" y="237.75" width="0.8" height="0.3" fill="#606060"/><rect x="19" y="222.12" width="0.6" height="0.3" fill="#585858"/><rect x="19" y="228.38" width="0.6" height="0.3" fill="#585858"/><rect x="19" y="234.62" width="0.6" height="0.3" fill="#585858"/><rect x="19" y="240.88" width="0.6" height="0.3" fill="#585858"/><text x="15.20" y="224.40" font-size="4.1" font-family="'Liberation Sans', sans-serif" fill="#c0c0c0" font-weight="normal" font-style="normal" textLength="2.10" lengthAdjust="spacingAndGlyphs">6</text><rect x="14.6" y="244.00" width="5" height="0.35" fill="#6a6a6a"/><rect x="18" y="256.50" width="1.6" height="0.35" fill="#6a6a6a"/><rect x="18.8" y="250.25" width="0.8" height="0.3" fill="#606060"/><rect x="18.8" y="262.75" width="0.8" height="0.3" fill="#606060"/><rect x="19" y="247.12" width="0.6" height="0.3" fill="#585858"/><rect x="19" y="253.38" width="0.6" height="0.3" fill="#585858"/><rect x="19" y="259.62" width="0.6" height="0.3" fill="#585858"/><rect x="19" y="265.88" width="0.6" height="0.3" fill="#585858"/><text x="15.20" y="249.40" font-size="4.1" font-family="'Liberation Sans', sans-serif" fill="#c0c0c0" font-weight="normal" font-style="normal" textLength="2.10" lengthAdjust="spacingAndGlyphs">7</text><rect x="14.6" y="269.00" width="5" height="0.35" fill="#6a6a6a"/><rect x="18" y="281.50" width="1.6" height="0.35" fill="#6a6a6a"/><rect x="18.8" y="275.25" width="0.8" height="0.3" fill="#606060"/><rect x="18.8" y="287.75" width="0.8" height="0.3" fill="#606060"/><rect x="19" y="272.12" width="0.6" height="0.3" fill="#585858"/><rect x="19" y="278.38" width="0.6" height="0.3" fill="#585858"/><rect x="19" y="284.62" width="0.6" height="0.3" fill="#585858"/><rect x="19" y="290.88" width="0.6" height="0.3" fill="#585858"/><text x="15.20" y="274.40" font-size="4.1" font-family="'Liberation Sans', sans-serif" fill="#c0c0c0" font-weight="normal" font-style="normal" textLength="2.10" lengthAdjust="spacingAndGlyphs">8</text><rect x="14.6" y="294.00" width="5" height="0.35" fill="#6a6a6a"/><rect x="18" y="306.50" width="1.6" height="0.35" fill="#6a6a6a"/><rect x="18.8" y="300.25" width="0.8" height="0.3" fill="#606060"/><rect x="18.8" y="312.75" width="0.8" height="0.3" fill="#606060"/><rect x="19" y="297.12" width="0.6" height="0.3" fill="#585858"/><rect x="19" y="303.38" width="0.6" height="0.3" fill="#585858"/><rect x="19" y="309.62" width="0.6" height="0.3" fill="#585858"/><rect x="19" y="315.88" width="0.6" height="0.3" fill="#585858"/><text x="15.20" y="299.40" font-size="4.1" font-family="'Liberation Sans', sans-serif" fill="#c0c0c0" font-weight="normal" font-style="normal" textLength="2.10" lengthAdjust="spacingAndGlyphs">9</text><rect x="14.6" y="319.00" width="5" height="0.35" fill="#6a6a6a"/><rect x="18" y="331.50" width="1.6" height="0.35" fill="#6a6a6a"/><rect x="18.8" y="325.25" width="0.8" height="0.3" fill="#606060"/><rect x="18.8" y="337.75" width="0.8" height="0.3" fill="#606060"/><rect x="19" y="322.12" width="0.6" height="0.3" fill="#585858"/><rect x="19" y="328.38" width="0.6" height="0.3" fill="#585858"/><rect x="19" y="334.62" width="0.6" height="0.3" fill="#585858"/><rect x="19" y="340.88" width="0.6" height="0.3" fill="#585858"/><text x="15.20" y="324.40" font-size="4.1" font-family="'Liberation Sans', sans-serif" fill="#c0c0c0" font-weight="normal" font-style="normal" textLength="4.20" lengthAdjust="spacingAndGlyphs">10</text><rect x="14.6" y="344.00" width="5" height="0.35" fill="#6a6a6a"/><rect x="18" y="356.50" width="1.6" height="0.35" fill="#6a6a6a"/><rect x="18.8" y="350.25" width="0.8" height="0.3" fill="#606060"/><rect x="18.8" y="362.75" width="0.8" height="0.3" fill="#606060"/><rect x="19" y="347.12" width="0.6" height="0.3" fill="#585858"/><rect x="19" y="353.38" width="0.6" height="0.3" fill="#585858"/><rect x="19" y="359.62" width="0.6" height="0.3" fill="#585858"/><rect x="19" y="365.88" width="0.6" height="0.3" fill="#585858"/><text x="15.20" y="349.40" font-size="4.1" font-family="'Liberation Sans', sans-serif" fill="#c0c0c0" font-weight="normal" font-style="normal" textLength="4.20" lengthAdjust="spacingAndGlyphs">11</text><rect x="14.6" y="369.00" width="5" height="0.35" fill="#6a6a6a"/><rect x="18" y="381.50" width="1.6" height="0.35" fill="#6a6a6a"/><rect x="18.8" y="375.25" width="0.8" height="0.3" fill="#606060"/><rect x="18.8" y="387.75" width="0.8" height="0.3" fill="#606060"/><rect x="19" y="372.12" width="0.6" height="0.3" fill="#585858"/><rect x="19" y="378.38" width="0.6" height="0.3" fill="#585858"/><rect x="19" y="384.62" width="0.6" height="0.3" fill="#585858"/><rect x="19" y="390.88" width="0.6" height="0.3" fill="#585858"/><text x="15.20" y="374.40" font-size="4.1" font-family="'Liberation Sans', sans-serif" fill="#c0c0c0" font-weight="normal" font-style="normal" textLength="4.20" lengthAdjust="spacingAndGlyphs">12</text></svg></div>
<div id="canvas"></div>
<div id="doc"><svg width="215" height="278" viewBox="172 68 215 278"><defs><pattern id="chk" x="173" y="69" width="5.3333" height="5.3333" patternUnits="userSpaceOnUse"><rect width="5.3333" height="5.3333" fill="#fff"/><rect x="2.6667" y="0" width="2.6667" height="2.6667" fill="#ccc"/><rect x="0" y="2.6667" width="2.6667" height="2.6667" fill="#ccc"/></pattern></defs><rect x="173" y="69" width="213" height="276" fill="url(#chk)"/><text x="186.00" y="87.60" font-size="6.4" font-family="'DejaVu Serif', 'Liberation Serif', serif" fill="#2e2e2e" font-weight="normal" font-style="normal" textLength="50.50" lengthAdjust="spacingAndGlyphs">I put the PRO in</text>
<text x="187.50" y="94.60" font-size="6.4" font-family="'DejaVu Serif', 'Liberation Serif', serif" fill="#2e2e2e" font-weight="normal" font-style="normal" textLength="47.00" lengthAdjust="spacingAndGlyphs">PROcrastinate.</text>
<text x="251.50" y="87.30" font-size="6.6" font-family="'Liberation Serif', serif" fill="#2e2e2e" font-weight="normal" font-style="italic" textLength="49.50" lengthAdjust="spacingAndGlyphs">Out of my mind.</text>
<text x="248.00" y="93.80" font-size="6.6" font-family="'Liberation Serif', serif" fill="#2e2e2e" font-weight="normal" font-style="italic" textLength="56.50" lengthAdjust="spacingAndGlyphs">Back in 5 minutes.</text>
<text x="354.50" y="86.50" font-size="6.6" font-family="'Liberation Serif', serif" fill="#3a3a3a" font-weight="normal" font-style="normal" textLength="15.50" lengthAdjust="spacingAndGlyphs">Have</text>
<text x="355.00" y="92.40" font-size="6.6" font-family="'Liberation Serif', serif" fill="#3a3a3a" font-weight="normal" font-style="normal" textLength="15.00" lengthAdjust="spacingAndGlyphs">your</text>
<text x="352.50" y="98.30" font-size="6.6" font-family="'Liberation Serif', serif" fill="#3a3a3a" font-weight="normal" font-style="normal" textLength="20.50" lengthAdjust="spacingAndGlyphs">people</text>
<text x="357.00" y="104.20" font-size="6.6" font-family="'Liberation Serif', serif" fill="#3a3a3a" font-weight="normal" font-style="normal" textLength="10.50" lengthAdjust="spacingAndGlyphs">call</text>
<text x="357.50" y="110.10" font-size="6.6" font-family="'Liberation Serif', serif" fill="#3a3a3a" font-weight="normal" font-style="normal" textLength="10.50" lengthAdjust="spacingAndGlyphs">my</text>
<text x="352.00" y="116.00" font-size="6.6" font-family="'Liberation Serif', serif" fill="#3a3a3a" font-weight="normal" font-style="normal" textLength="21.50" lengthAdjust="spacingAndGlyphs">people.</text>
<text x="188.00" y="123.50" font-size="27.5" font-family="'Liberation Sans', sans-serif" fill="#000" font-weight="bold" font-style="italic" textLength="16.50" lengthAdjust="spacingAndGlyphs" stroke="#000" stroke-width="0.5" stroke-linejoin="round">H</text>
<text x="204.50" y="123.50" font-size="23.5" font-family="'Liberation Sans', sans-serif" fill="#000" font-weight="bold" font-style="italic" textLength="43.00" lengthAdjust="spacingAndGlyphs" stroke="#000" stroke-width="0.6" stroke-linejoin="round">appy</text>
<text x="195.00" y="145.00" font-size="26" font-family="'Liberation Sans', sans-serif" fill="#000" font-weight="bold" font-style="italic" textLength="15.00" lengthAdjust="spacingAndGlyphs" stroke="#000" stroke-width="0.5" stroke-linejoin="round">B</text>
<text x="210.50" y="145.00" font-size="23" font-family="'Liberation Sans', sans-serif" fill="#000" font-weight="bold" font-style="italic" textLength="59.00" lengthAdjust="spacingAndGlyphs" stroke="#000" stroke-width="0.6" stroke-linejoin="round">irthday</text>
<text x="280.00" y="117.00" font-size="16" font-family="'Liberation Sans', sans-serif" fill="#000" font-weight="bold" font-style="italic" textLength="59.00" lengthAdjust="spacingAndGlyphs" stroke="#000" stroke-width="0.15" stroke-linejoin="round">Good Luck!</text>
<text x="290.00" y="123.00" font-size="5.5" font-family="'Liberation Serif', serif" fill="#555" font-weight="normal" font-style="italic" textLength="43.00" lengthAdjust="spacingAndGlyphs">We’ll miss you.</text>
<text x="355.00" y="131.50" font-size="5" font-family="'Liberation Sans', sans-serif" fill="#6a6a6a" font-weight="normal" font-style="normal" textLength="17.00" lengthAdjust="spacingAndGlyphs">-Nate-</text>
<text x="187.00" y="165.00" font-size="6" font-family="'Liberation Sans', sans-serif" fill="#5c5c5c" font-weight="normal" font-style="normal" textLength="64.00" lengthAdjust="spacingAndGlyphs">(Can you hear me now?)</text>
<text x="186.50" y="180.00" font-size="7.6" font-family="'Liberation Sans', sans-serif" fill="#000" font-weight="bold" font-style="italic" textLength="42.00" lengthAdjust="spacingAndGlyphs" stroke="#000" stroke-width="0.05" stroke-linejoin="round">just a quick hello</text>
<text x="355.50" y="148.50" font-size="10" font-family="'Liberation Sans', sans-serif" fill="#000" font-weight="bold" font-style="italic" textLength="15.00" lengthAdjust="spacingAndGlyphs" stroke="#000" stroke-width="0.2" stroke-linejoin="round">You</text>
<text x="342.50" y="157.50" font-size="10" font-family="'Liberation Sans', sans-serif" fill="#000" font-weight="bold" font-style="italic" textLength="28.50" lengthAdjust="spacingAndGlyphs" stroke="#000" stroke-width="0.2" stroke-linejoin="round">couldn’t</text>
<text x="347.00" y="167.00" font-size="10" font-family="'Liberation Sans', sans-serif" fill="#000" font-weight="bold" font-style="italic" textLength="24.00" lengthAdjust="spacingAndGlyphs" stroke="#000" stroke-width="0.2" stroke-linejoin="round">be any</text>
<text x="349.00" y="176.00" font-size="10" font-family="'Liberation Sans', sans-serif" fill="#000" font-weight="bold" font-style="italic" textLength="21.00" lengthAdjust="spacingAndGlyphs" stroke="#000" stroke-width="0.2" stroke-linejoin="round">cooler</text>
<text x="354.00" y="185.00" font-size="10" font-family="'Liberation Sans', sans-serif" fill="#000" font-weight="bold" font-style="italic" textLength="16.00" lengthAdjust="spacingAndGlyphs" stroke="#000" stroke-width="0.2" stroke-linejoin="round">than</text>
<text x="343.00" y="193.50" font-size="10" font-family="'Liberation Sans', sans-serif" fill="#000" font-weight="bold" font-style="italic" textLength="28.00" lengthAdjust="spacingAndGlyphs" stroke="#000" stroke-width="0.2" stroke-linejoin="round">you are.</text>
<text x="186.00" y="196.50" font-size="6" font-family="'Liberation Serif', serif" fill="#666" font-weight="normal" font-style="italic" textLength="42.00" lengthAdjust="spacingAndGlyphs">Special Edition!</text>
<text x="190.50" y="209.50" font-size="6" font-family="'Liberation Serif', serif" fill="#666" font-weight="normal" font-style="italic" textLength="26.50" lengthAdjust="spacingAndGlyphs">Here’s the</text>
<text x="187.00" y="215.50" font-size="6" font-family="'Liberation Serif', serif" fill="#666" font-weight="normal" font-style="italic" textLength="33.00" lengthAdjust="spacingAndGlyphs">whole scoop.</text>
<text x="186.00" y="227.50" font-size="5.6" font-family="'DejaVu Serif', 'Liberation Serif', serif" fill="#444" font-weight="normal" font-style="normal" textLength="43.00" lengthAdjust="spacingAndGlyphs">MEMORANDUM</text>
<text x="240.00" y="195.00" font-size="15.5" font-family="'Liberation Sans', sans-serif" fill="#000" font-weight="bold" font-style="italic" textLength="22.50" lengthAdjust="spacingAndGlyphs" stroke="#000" stroke-width="0.25" stroke-linejoin="round">Look</text>
<text x="240.50" y="200.60" font-size="7.6" font-family="'DejaVu Serif', 'Liberation Serif', serif" fill="#555" font-weight="normal" font-style="normal" textLength="23.00" lengthAdjust="spacingAndGlyphs">me up!</text>
<text x="240.50" y="225.30" font-size="16" font-family="'Liberation Sans', sans-serif" fill="#000" font-weight="bold" font-style="italic" textLength="21.50" lengthAdjust="spacingAndGlyphs" stroke="#000" stroke-width="0.25" stroke-linejoin="round">Fun</text>
<text x="263.00" y="224.50" font-size="6.2" font-family="'Liberation Sans', sans-serif" fill="#111" font-weight="bold" font-style="normal" textLength="19.50" lengthAdjust="spacingAndGlyphs">-o-dex</text>
<text x="351.50" y="210.50" font-size="8.6" font-family="'DejaVu Serif', 'Liberation Serif', serif" fill="#222" font-weight="normal" font-style="normal" textLength="21.00" lengthAdjust="spacingAndGlyphs" stroke="#222" stroke-width="0.18">I will</text>
<text x="351.50" y="219.00" font-size="8.6" font-family="'DejaVu Serif', 'Liberation Serif', serif" fill="#222" font-weight="normal" font-style="normal" textLength="21.50" lengthAdjust="spacingAndGlyphs" stroke="#222" stroke-width="0.18">start</text>
<text x="338.50" y="227.00" font-size="8.6" font-family="'DejaVu Serif', 'Liberation Serif', serif" fill="#222" font-weight="normal" font-style="normal" textLength="35.50" lengthAdjust="spacingAndGlyphs" stroke="#222" stroke-width="0.18">working</text>
<text x="350.00" y="235.50" font-size="8.6" font-family="'DejaVu Serif', 'Liberation Serif', serif" fill="#222" font-weight="normal" font-style="normal" textLength="23.00" lengthAdjust="spacingAndGlyphs" stroke="#222" stroke-width="0.18">when</text>
<text x="359.50" y="243.00" font-size="8.6" font-family="'DejaVu Serif', 'Liberation Serif', serif" fill="#222" font-weight="normal" font-style="normal" textLength="12.50" lengthAdjust="spacingAndGlyphs" stroke="#222" stroke-width="0.18">my</text>
<text x="332.50" y="252.50" font-size="15" font-family="'Liberation Sans', sans-serif" fill="#000" font-weight="bold" font-style="italic" textLength="35.00" lengthAdjust="spacingAndGlyphs" stroke="#000" stroke-width="0.35" stroke-linejoin="round">coffee</text>
<text x="355.00" y="260.50" font-size="8.6" font-family="'DejaVu Serif', 'Liberation Serif', serif" fill="#222" font-weight="normal" font-style="normal" textLength="19.00" lengthAdjust="spacingAndGlyphs" stroke="#222" stroke-width="0.18">does.</text>
<text x="339.00" y="273.00" font-size="5.4" font-family="'DejaVu Serif', 'Liberation Serif', serif" fill="#555" font-weight="normal" font-style="normal" textLength="32.50" lengthAdjust="spacingAndGlyphs">(Or not. Yet.)</text>
<text x="186.00" y="251.00" font-size="10" font-family="'Liberation Sans', sans-serif" fill="#000" font-weight="bold" font-style="italic" textLength="36.50" lengthAdjust="spacingAndGlyphs" stroke="#000" stroke-width="0.15" stroke-linejoin="round">You’re my</text>
<text x="226.00" y="254.50" font-size="24.5" font-family="'Liberation Sans', sans-serif" fill="#000" font-weight="bold" font-style="italic" textLength="42.50" lengthAdjust="spacingAndGlyphs" stroke="#000" stroke-width="0.7" stroke-linejoin="round">type.</text>
<text x="186.00" y="277.00" font-size="5.8" font-family="'DejaVu Serif', 'Liberation Serif', serif" fill="#3a3a3a" font-weight="normal" font-style="normal" textLength="49.00" lengthAdjust="spacingAndGlyphs">Today’s lead story:</text>
<text x="186.00" y="290.50" font-size="6" font-family="'Liberation Mono', monospace" fill="#2a2a2a" font-weight="normal" font-style="normal" textLength="46.00" lengthAdjust="spacingAndGlyphs">Better than email.</text>
<text x="186.00" y="303.00" font-size="6" font-family="'Liberation Mono', monospace" fill="#2a2a2a" font-weight="normal" font-style="normal" textLength="46.00" lengthAdjust="spacingAndGlyphs">It was a dark and</text>
<text x="187.50" y="308.50" font-size="6" font-family="'Liberation Mono', monospace" fill="#2a2a2a" font-weight="normal" font-style="normal" textLength="41.50" lengthAdjust="spacingAndGlyphs">stormy night. . .</text>
<text x="251.00" y="278.50" font-size="8.6" font-family="'DejaVu Serif', 'Liberation Serif', serif" fill="#222" font-weight="normal" font-style="normal" textLength="44.00" lengthAdjust="spacingAndGlyphs" stroke="#222" stroke-width="0.18">Looks like</text>
<text x="253.00" y="285.50" font-size="8.6" font-family="'DejaVu Serif', 'Liberation Serif', serif" fill="#222" font-weight="normal" font-style="normal" textLength="38.00" lengthAdjust="spacingAndGlyphs" stroke="#222" stroke-width="0.18">someone</text>
<text x="248.00" y="292.50" font-size="8.6" font-family="'DejaVu Serif', 'Liberation Serif', serif" fill="#222" font-weight="normal" font-style="normal" textLength="45.50" lengthAdjust="spacingAndGlyphs" stroke="#222" stroke-width="0.18">has a case</text>
<text x="266.00" y="300.50" font-size="8.6" font-family="'DejaVu Serif', 'Liberation Serif', serif" fill="#222" font-weight="normal" font-style="normal" textLength="26.00" lengthAdjust="spacingAndGlyphs" stroke="#222" stroke-width="0.18">of the</text>
<text x="243.00" y="311.50" font-size="16" font-family="'Liberation Sans', sans-serif" fill="#000" font-weight="bold" font-style="italic" textLength="57.00" lengthAdjust="spacingAndGlyphs" stroke="#000" stroke-width="0.3" stroke-linejoin="round">Mondays.</text>
<text x="187.00" y="322.00" font-size="5.5" font-family="'Liberation Sans', sans-serif" fill="#666" font-weight="normal" font-style="normal" textLength="30.50" lengthAdjust="spacingAndGlyphs">Where’s the</text>
<text x="190.00" y="327.00" font-size="5.5" font-family="'Liberation Sans', sans-serif" fill="#111" font-weight="bold" font-style="normal" textLength="11.00" lengthAdjust="spacingAndGlyphs">any</text>
<text x="202.50" y="327.00" font-size="5.5" font-family="'Liberation Sans', sans-serif" fill="#666" font-weight="normal" font-style="normal" textLength="11.50" lengthAdjust="spacingAndGlyphs">key?</text>
<text x="241.00" y="329.50" font-size="6" font-family="'Liberation Serif', serif" fill="#444" font-weight="normal" font-style="italic" textLength="67.00" lengthAdjust="spacingAndGlyphs">Have you seen my stapler?</text>
<text x="332.50" y="299.50" font-size="5.8" font-family="'DejaVu Serif', 'Liberation Serif', serif" fill="#3a3a3a" font-weight="normal" font-style="normal" textLength="38.50" lengthAdjust="spacingAndGlyphs">I always give</text>
<text x="331.50" y="305.50" font-size="5.8" font-family="'DejaVu Serif', 'Liberation Serif', serif" fill="#3a3a3a" font-weight="normal" font-style="normal" textLength="40.50" lengthAdjust="spacingAndGlyphs">100% at work:</text>
<text x="333.50" y="312.00" font-size="5.6" font-family="'Liberation Serif', serif" fill="#333" font-weight="normal" font-style="italic" textLength="31.50" lengthAdjust="spacingAndGlyphs">12% Monday</text>
<text x="333.50" y="317.00" font-size="5.6" font-family="'Liberation Serif', serif" fill="#333" font-weight="normal" font-style="italic" textLength="32.50" lengthAdjust="spacingAndGlyphs">23% Tuesday</text>
<text x="333.50" y="322.00" font-size="5.6" font-family="'Liberation Serif', serif" fill="#333" font-weight="normal" font-style="italic" textLength="39.00" lengthAdjust="spacingAndGlyphs">40% Wednesday</text>
<text x="333.50" y="327.00" font-size="5.6" font-family="'Liberation Serif', serif" fill="#333" font-weight="normal" font-style="italic" textLength="34.50" lengthAdjust="spacingAndGlyphs">20% Thursday</text>
<text x="336.50" y="332.00" font-size="5.6" font-family="'Liberation Serif', serif" fill="#333" font-weight="normal" font-style="italic" textLength="25.50" lengthAdjust="spacingAndGlyphs">5% Friday</text></svg></div>
<div id="status"><svg width="526" height="6" viewBox="14 381 526 6"><text x="18.00" y="385.30" font-size="3.9" font-family="'Liberation Sans', sans-serif" fill="#e0e0e0" font-weight="normal" font-style="normal" textLength="7.00" lengthAdjust="spacingAndGlyphs">25%</text><rect x="30" y="382.5" width="3" height="2.6" fill="none" stroke="#ccc" stroke-width="0.5"/><path d="M32 382 l2 0 l0 2" stroke="#ccc" stroke-width="0.5" fill="none"/><text x="51.00" y="385.30" font-size="3.9" font-family="'Liberation Sans', sans-serif" fill="#d6d6d6" font-weight="normal" font-style="normal" textLength="27.50" lengthAdjust="spacingAndGlyphs">Doc: 24.8M/12.3M</text><path d="M94 382.8 l1.3 1.3 l-1.3 1.3" stroke="#ccc" stroke-width="0.5" fill="none"/><rect x="14" y="381" width="526" height="0.5" fill="#3c3c3c"/></svg></div>
<div id="dock"><svg width="20" height="366" viewBox="540 21 20 366"><rect x="540" y="21" width="20" height="366" fill="#484848"/><rect x="540" y="21" width="20" height="3.6" fill="#3e3e3e"/><rect x="540" y="21" width="0.6" height="366" fill="#3a3a3a"/><rect x="546" y="25" width="14" height="362" fill="#515151"/><rect x="546" y="25" width="0.5" height="362" fill="#484848"/><rect x="559.5" y="21" width="0.6" height="366" fill="#3e3e3e"/><path d="M554.6 22 l0.8 0.8 l-0.8 0.8 M556 22 l0.8 0.8 l-0.8 0.8" stroke="#ccc" stroke-width="0.4" fill="none"/><rect x="546.5" y="48.5" width="13" height="0.6" fill="#464646"/><rect x="550" y="50.1" width="6" height="0.4" fill="#4b4b4b"/><rect x="546.5" y="71.5" width="13" height="0.6" fill="#464646"/><rect x="550" y="73.1" width="6" height="0.4" fill="#4b4b4b"/><rect x="546.5" y="85" width="13" height="0.6" fill="#464646"/><rect x="550" y="86.6" width="6" height="0.4" fill="#4b4b4b"/><rect x="546.5" y="107.5" width="13" height="0.6" fill="#464646"/><rect x="550" y="109.1" width="6" height="0.4" fill="#4b4b4b"/><rect x="546.5" y="121.5" width="13" height="0.6" fill="#464646"/><rect x="550" y="123.1" width="6" height="0.4" fill="#4b4b4b"/><rect x="546.5" y="145" width="13" height="0.6" fill="#464646"/><rect x="550" y="146.6" width="6" height="0.4" fill="#4b4b4b"/><rect x="546.5" y="168.5" width="13" height="0.6" fill="#464646"/><rect x="550" y="170.1" width="6" height="0.4" fill="#4b4b4b"/><rect x="546.5" y="191.5" width="13" height="0.6" fill="#464646"/><rect x="550" y="193.1" width="6" height="0.4" fill="#4b4b4b"/><rect x="546.5" y="205" width="13" height="0.6" fill="#464646"/><rect x="550" y="206.6" width="6" height="0.4" fill="#4b4b4b"/><rect x="546.5" y="219" width="13" height="0.6" fill="#464646"/><rect x="550" y="220.6" width="6" height="0.4" fill="#4b4b4b"/><rect x="550.1999999999999" y="30.4" width="2" height="2" fill="#dedede"/><rect x="550.1999999999999" y="33.4" width="2" height="2.4" fill="#dedede"/><path d="M552.8 31.2 l2 0 q1.4 1 0 2.8 l-0.8 0.6" stroke="#dedede" stroke-width="0.7" fill="none"/><path d="M550.4 39.800000000000004 l5 2.8 l-5 2.8 z" fill="#dedede"/><circle cx="552.8" cy="55.7" r="1.7" fill="#dedede"/><path d="M549.8 55.7 l6 0 M552.8 52.7 l0 6 M550.6999999999999 53.6 l4.2 4.2 M550.6999999999999 57.800000000000004 l4.2 -4.2" stroke="#dedede" stroke-width="0.5"/><path d="M549.8 67.1 l0 -2 l1.2 -1 l1 0.6 l1.2 -1.6 l1.4 1.2 l1.2 0.6 l0 2.2 z" fill="#dedede"/><circle cx="551.3" cy="77.4" r="1.4" fill="#a8a8a8"/><rect x="554.1999999999999" y="75.8" width="1.3" height="3.2" fill="#f0f0f0"/><rect x="549.8" y="80" width="6" height="1.3" fill="#e8e8e8"/><rect x="551.3" y="92.4" width="3.2" height="3.2" rx="0.5" fill="#f0f0f0"/><path d="M550.4 89 l1.6 2.6 M552.9 88.6 l0 3 M555.4 89 l-1.6 2.6" stroke="#dedede" stroke-width="0.9" fill="none"/><path d="M550.0 99.19999999999999 l1.4 -0.8 l4.2 0.6 l0 1.4 l-5.6 0 z" fill="#dedede"/><rect x="550.0" y="102.0" width="3" height="2.4" fill="#a4a4a4"/><path d="M553.8 101.8 l2.4 0 l0 3.2 l-1.2 0 z" fill="#f4f4f4"/><rect x="549.0" y="112" width="2.4" height="3.4" fill="none" stroke="#c0c0c0" stroke-width="0.5"/><path d="M551.0 117.8 l0 -2 q0 -2.6 2.5 -2.6 q2.5 0 2.5 2.6 l0 2 z" fill="#f0f0f0"/><circle cx="552.5" cy="115.2" r="0.5" fill="#222"/><circle cx="554.5" cy="115.2" r="0.5" fill="#222"/><text x="549.60" y="131.60" font-size="6" font-family="'Liberation Sans', sans-serif" fill="#dedede" font-weight="normal" font-style="normal" textLength="4.00" lengthAdjust="spacingAndGlyphs">A</text><rect x="554.3" y="126.4" width="0.6" height="6" fill="#dedede"/><text x="550.60" y="140.40" font-size="6.4" font-family="'Liberation Sans', sans-serif" fill="#dedede" font-weight="bold" font-style="normal" textLength="4.40" lengthAdjust="spacingAndGlyphs">¶</text><ellipse cx="554.0" cy="150.6" rx="2.2" ry="1.9" fill="#d0d0d0"/><ellipse cx="551.4" cy="153.2" rx="2.4" ry="2" fill="#ececec"/><circle cx="552.8" cy="151.8" r="0.6" fill="#333"/><path d="M550.0 165 l0 -3.6 l2 0 l0 -1.6 l1 -1 l1 1 l0 1.6 l1.8 0 l0 2.6 l-2 0 l0 1 z" fill="#e8e8e8"/><circle cx="553.5999999999999" cy="163.4" r="0.7" fill="#333"/><rect x="550.1999999999999" y="172" width="5.4" height="5.8" rx="0.9" fill="#e6e6e6"/><rect x="551.4" y="173.4" width="3" height="0.6" fill="#8a8a8a"/><rect x="551.3" y="175.3" width="3.2" height="1" rx="0.4" fill="#1c1c1c"/><path d="M550.3 181.7 l5.2 0 l0 4.2 l-1.6 1.8 l-3.6 0 z" fill="#ececec"/><rect x="551.8" y="183.29999999999998" width="2.2" height="2.4" fill="#a8a8a8"/><path d="M552.8 195 l2.7 1.5 l0 3 l-2.7 1.5 l-2.7 -1.5 l0 -3 z M550.0999999999999 196.5 l2.7 1.5 l2.7 -1.5 M552.8 198 l0 3" stroke="#dedede" stroke-width="0.6" fill="none"/><ellipse cx="553.0" cy="212" rx="3.9" ry="3" fill="#bdbdbd"/><path d="M550.5999999999999 212.8 q0.4 -2.4 2.2 -0.6 q1.4 -2.2 2.6 0.6 M550.8 211 q2 -1.4 4.4 0" stroke="#6a6a6a" stroke-width="0.5" fill="none"/></svg></div>
<div id="panels"><div id="picker"></div><div id="huebar"></div><svg width="80" height="366" viewBox="560 21 80 366"><rect x="560" y="21" width="80" height="3.6" fill="#3e3e3e"/><path d="M634.6 22 l0.8 0.8 l-0.8 0.8 M636 22 l0.8 0.8 l-0.8 0.8" stroke="#ccc" stroke-width="0.4" fill="none"/><rect x="560" y="24.6" width="80" height="5.6" fill="#3e3e3e"/><rect x="560.5" y="24.6" width="11.5" height="5.8" fill="#535353"/><text x="562.00" y="28.80" font-size="4.1" font-family="'Liberation Sans', sans-serif" fill="#f4f4f4" font-weight="bold" font-style="normal" textLength="7.50" lengthAdjust="spacingAndGlyphs">Color</text><text x="575.00" y="28.80" font-size="4.1" font-family="'Liberation Sans', sans-serif" fill="#a8a8a8" font-weight="normal" font-style="normal" textLength="14.50" lengthAdjust="spacingAndGlyphs">Swatches</text><path d="M634 26.4 l3.6 0 M634 27.5 l3.6 0 M634 28.6 l3.6 0" stroke="#bbb" stroke-width="0.45"/><rect x="566.5" y="38" width="6" height="6" fill="#fff"/><rect x="563" y="34.3" width="6" height="6" fill="#38957a" stroke="#d0d0d0" stroke-width="0.6"/><defs><linearGradient id="gh" x1="0" x2="1" y1="0" y2="0"><stop offset="0" stop-color="#ffffff"/><stop offset="1" stop-color="#00f0a0"/></linearGradient><linearGradient id="gv" x1="0" x2="0" y1="0" y2="1"><stop offset="0" stop-color="#000" stop-opacity="0"/><stop offset="1" stop-color="#000" stop-opacity="1"/></linearGradient><linearGradient id="hue" x1="0" x2="0" y1="0" y2="1"><stop offset="0" stop-color="#ff0000"/><stop offset="0.1667" stop-color="#ff00ff"/><stop offset="0.3333" stop-color="#0000ff"/><stop offset="0.5" stop-color="#00ffff"/><stop offset="0.6667" stop-color="#00ff00"/><stop offset="0.8333" stop-color="#ffff00"/><stop offset="1" stop-color="#ff0000"/></linearGradient></defs><circle cx="597" cy="110.8" r="1.5" fill="none" stroke="#d4f2e6" stroke-width="0.55"/><path d="M624.7 122.9 l2.6 1.8 l-2.6 1.8 z" fill="#f2f2f2"/><rect x="560" y="205.6" width="80" height="0.8" fill="#3a3a3a"/><rect x="560" y="206.4" width="80" height="6.2" fill="#3e3e3e"/><rect x="560.5" y="206.4" width="13.3" height="6.4" fill="#535353"/><text x="562.00" y="210.70" font-size="4.1" font-family="'Liberation Sans', sans-serif" fill="#f4f4f4" font-weight="bold" font-style="normal" textLength="9.80" lengthAdjust="spacingAndGlyphs">Layers</text><text x="576.30" y="210.70" font-size="4.1" font-family="'Liberation Sans', sans-serif" fill="#a8a8a8" font-weight="normal" font-style="normal" textLength="13.70" lengthAdjust="spacingAndGlyphs">Channels</text><text x="595.00" y="210.70" font-size="4.1" font-family="'Liberation Sans', sans-serif" fill="#a8a8a8" font-weight="normal" font-style="normal" textLength="9.00" lengthAdjust="spacingAndGlyphs">Paths</text><path d="M634 208.4 l3.6 0 M634 209.5 l3.6 0 M634 210.6 l3.6 0" stroke="#bbb" stroke-width="0.45"/><rect x="561.2" y="215" width="29.6" height="6" fill="#474747"/><circle cx="564.6" cy="217.4" r="0.9" fill="none" stroke="#ddd" stroke-width="0.45"/><path d="M563.9 218.2 l-0.9 1" stroke="#ddd" stroke-width="0.45"/><text x="567.80" y="219.20" font-size="4.1" font-family="'Liberation Sans', sans-serif" fill="#e4e4e4" font-weight="normal" font-style="normal" textLength="7.20" lengthAdjust="spacingAndGlyphs">Kind</text><path d="M587.4 217.4 l1 1.1 l1 -1.1" stroke="#bbb" stroke-width="0.45" fill="none"/><rect x="594.6" y="216.2" width="3.6" height="3" fill="none" stroke="#ddd" stroke-width="0.6"/><rect x="595.4" y="217.6" width="2" height="1" fill="#ddd"/><circle cx="604.3" cy="217.8" r="1.7" fill="none" stroke="#ddd" stroke-width="0.5"/><path d="M604.3 216.1 a1.7 1.7 0 0 1 0 3.4 z" fill="#ddd"/><text x="610.60" y="219.60" font-size="5" font-family="'Liberation Serif', serif" fill="#e0e0e0" font-weight="bold" font-style="normal" textLength="3.60" lengthAdjust="spacingAndGlyphs">T</text><rect x="618.6" y="216.2" width="3.4" height="3.2" fill="none" stroke="#ddd" stroke-width="0.6"/><path d="M620.3 216 l0 3.6" stroke="#ddd" stroke-width="0.4"/><path d="M626.8 216 l2.2 0 l1 1 l0 2.6 l-3.2 0 z" fill="#e6e6e6"/><rect x="628.2" y="218" width="1.4" height="1.4" fill="#333"/><circle cx="636.4" cy="216.2" r="1" fill="#e0e0e0"/><rect x="636" y="217" width="0.8" height="2" fill="#9a9a9a"/><rect x="561.2" y="223.8" width="42.8" height="5.8" fill="#474747"/><text x="563.90" y="228.00" font-size="4.1" font-family="'Liberation Sans', sans-serif" fill="#e4e4e4" font-weight="normal" font-style="normal" textLength="9.90" lengthAdjust="spacingAndGlyphs">Normal</text><path d="M601 226 l1 1.1 l1 -1.1" stroke="#bbb" stroke-width="0.45" fill="none"/><text x="607.20" y="228.00" font-size="4.1" font-family="'Liberation Sans', sans-serif" fill="#c8c8c8" font-weight="normal" font-style="normal" textLength="11.40" lengthAdjust="spacingAndGlyphs">Opacity:</text><rect x="620.5" y="223.8" width="17" height="5.8" fill="#4d4d4d"/><text x="622.00" y="228.00" font-size="4.1" font-family="'Liberation Sans', sans-serif" fill="#e4e4e4" font-weight="normal" font-style="normal" textLength="8.50" lengthAdjust="spacingAndGlyphs">100%</text><path d="M634.8 226 l1 1.1 l1 -1.1" stroke="#bbb" stroke-width="0.45" fill="none"/><text x="562.00" y="236.90" font-size="4.1" font-family="'Liberation Sans', sans-serif" fill="#9c9c9c" font-weight="normal" font-style="normal" textLength="6.60" lengthAdjust="spacingAndGlyphs">Lock:</text><rect x="572.8" y="234" width="3.4" height="3.4" fill="none" stroke="#ddd" stroke-width="0.5" stroke-dasharray="0.7 0.4"/><rect x="573.7" y="234.9" width="1.6" height="1.6" fill="#ddd"/><path d="M580.4 237.6 l3 -3.4" stroke="#e4e4e4" stroke-width="0.9"/><path d="M588.8 233.6 l0 4.2 M586.7 235.7 l4.2 0" stroke="#ddd" stroke-width="0.6"/><circle cx="588.8" cy="235.7" r="0.9" fill="#ddd"/><rect x="594.8" y="234.2" width="3.2" height="3" fill="none" stroke="#ddd" stroke-width="0.5"/><path d="M596.8 234 l1.8 0 M596.8 237.4 l1.8 0" stroke="#ddd" stroke-width="0.5"/><rect x="602.2" y="235.4" width="3.4" height="2.4" fill="#e8e8e8"/><path d="M602.9 235.4 l0 -0.8 q1 -1.2 2 0 l0 0.8" stroke="#e8e8e8" stroke-width="0.5" fill="none"/><text x="614.40" y="236.90" font-size="4.1" font-family="'Liberation Sans', sans-serif" fill="#c8c8c8" font-weight="normal" font-style="normal" textLength="3.80" lengthAdjust="spacingAndGlyphs">Fill:</text><rect x="620.5" y="232.8" width="17" height="5.6" fill="#4d4d4d"/><text x="622.00" y="236.90" font-size="4.1" font-family="'Liberation Sans', sans-serif" fill="#e4e4e4" font-weight="normal" font-style="normal" textLength="8.50" lengthAdjust="spacingAndGlyphs">100%</text><path d="M634.8 235 l1 1.1 l1 -1.1" stroke="#bbb" stroke-width="0.45" fill="none"/><rect x="560.5" y="240.4" width="79" height="0.5" fill="#474747"/><rect x="569" y="241" width="66" height="13.2" fill="#6b6b6b"/><rect x="560.5" y="254.4" width="75" height="0.5" fill="#474747"/><ellipse cx="564.8" cy="247.6" rx="2" ry="1.3" fill="#f0f0f0"/><circle cx="564.8" cy="247.6" r="0.7" fill="#444"/><defs><pattern id="chk2" x="570" y="241" width="1.6" height="1.6" patternUnits="userSpaceOnUse"><rect width="1.6" height="1.6" fill="#fff"/><rect width="0.8" height="0.8" fill="#b4b4b4"/><rect x="0.8" y="0.8" width="0.8" height="0.8" fill="#b4b4b4"/></pattern></defs><rect x="570" y="241.2" width="11" height="12.8" fill="url(#chk2)"/><rect x="570" y="241.2" width="11" height="12.8" fill="#e4e4e4" opacity="0.45"/><path d="M571 243.6 l3.4 0 M571.4 244.8 l3.6 0 M574 242.2 l1.6 0 M576.4 243 l2.4 0 M578 245 l1.6 0 M578 246 l1.6 0 M573.6 246.4 l1.6 0 M573.6 247.6 l1.6 0 M571 248.8 l3 0 M573.6 249.6 l2 0 M577.6 247.6 l2 0 M577.4 248.6 l2.2 0 M571 250.4 l2 0 M574.4 250.8 l2.6 0 M574 251.6 l3 0 M578 251 l1.8 0 M571 252.4 l2 0 M574.6 252.8 l3 0" stroke="#333" stroke-width="0.55" opacity="0.75"/><text x="582.80" y="249.40" font-size="4.1" font-family="'Liberation Sans', sans-serif" fill="#e8e8e8" font-weight="normal" font-style="normal" textLength="11.00" lengthAdjust="spacingAndGlyphs">Layer 6</text><rect x="560" y="378.4" width="80" height="0.5" fill="#494949"/><path d="M573 382.2 a1.2 1 0 0 1 1.6 0 M574.6 382.2 a1.2 1 0 0 1 1.8 0" stroke="#858585" stroke-width="0.5" fill="none"/><ellipse cx="573.7" cy="382.3" rx="1.2" ry="0.9" fill="none" stroke="#858585" stroke-width="0.45"/><ellipse cx="575.6" cy="382.3" rx="1.2" ry="0.9" fill="none" stroke="#858585" stroke-width="0.45"/><text x="581.60" y="383.60" font-size="4.6" font-family="'Liberation Serif', serif" fill="#e0e0e0" font-weight="bold" font-style="italic" textLength="3.80" lengthAdjust="spacingAndGlyphs">fx</text><rect x="590.2" y="380.4" width="4" height="3.4" fill="#e4e4e4"/><circle cx="592.2" cy="382.1" r="0.9" fill="#444"/><circle cx="601" cy="382.2" r="1.7" fill="none" stroke="#e0e0e0" stroke-width="0.5"/><path d="M601 380.5 a1.7 1.7 0 0 0 0 3.4 z" fill="#e0e0e0"/><path d="M608 380.6 l1.6 0 l0.5 0.6 l2 0 l0 2.8 l-4.1 0 z" fill="#e0e0e0"/><rect x="617.2" y="380.6" width="3.4" height="3.2" fill="none" stroke="#e0e0e0" stroke-width="0.55"/><path d="M619.6 383.8 l1 -1 l0 1 z" fill="#e0e0e0"/><path d="M626.6 381 l2.8 0 M627 381.4 l0.3 2.6 l1.4 0 l0.3 -2.6" stroke="#8a8a8a" stroke-width="0.5" fill="none"/></svg></div>
<div id="taskbar"><svg width="640" height="13" viewBox="0 387 640 13"><defs><linearGradient id="tbg" x1="0" x2="1" y1="0" y2="0"><stop offset="0" stop-color="#0c0c0c"/><stop offset="0.45" stop-color="#0a0f0d"/><stop offset="0.55" stop-color="#06201a"/><stop offset="0.68" stop-color="#041a14"/><stop offset="0.82" stop-color="#031811"/><stop offset="1" stop-color="#04130e"/></linearGradient></defs><rect x="0" y="386.6" width="640" height="13.4" fill="url(#tbg)"/><rect x="0" y="386.6" width="15.5" height="13.4" fill="#060606"/><rect x="15.5" y="386.6" width="115" height="13.4" fill="#2d2d2d"/><path d="M5.4 390.9 l2.6 -0.4 l0 2.7 l-2.6 0 z M8.4 390.4 l3.2 -0.5 l0 3.3 l-3.2 0 z M5.4 393.6 l2.6 0 l0 2.7 l-2.6 -0.4 z M8.4 393.6 l3.2 0 l0 3.3 l-3.2 -0.5 z" fill="#f4f4f4"/><text x="20.00" y="395.20" font-size="5" font-family="'Liberation Sans', sans-serif" fill="#a0a0a0" font-weight="normal" font-style="normal" textLength="65.00" lengthAdjust="spacingAndGlyphs">Search the web and Windows</text><rect x="136" y="391.2" width="4.8" height="4.6" fill="none" stroke="#d8d8d8" stroke-width="0.8"/><path d="M135 392.2 l0 2.6 M141.8 392.2 l0 2.6" stroke="#c0c0c0" stroke-width="0.6"/><rect x="151.8" y="390.8" width="6.8" height="5.6" fill="#f4d672"/><rect x="151.8" y="390" width="3" height="1.4" fill="#e8b93c"/><rect x="153" y="394" width="4.6" height="1.8" fill="#4aa6e0"/><rect x="153" y="395.6" width="4.6" height="0.8" fill="#f4d672"/><rect x="168.2" y="391.2" width="6.6" height="5.8" fill="#f4f4f4"/><path d="M169.8 391.2 q1.7 -2.8 3.4 0" stroke="#f4f4f4" stroke-width="0.7" fill="none"/><path d="M169.9 392.6 l1.4 0 l0 1.4 l-1.4 0 z M171.7 392.6 l1.4 0 l0 1.4 l-1.4 0 z M169.9 394.4 l1.4 0 l0 1.4 l-1.4 0 z M171.7 394.4 l1.4 0 l0 1.4 l-1.4 0 z" fill="#222"/><rect x="184.3" y="390.5" width="6.3" height="6" rx="0.6" fill="#7a8ea6"/><rect x="185.1" y="391.3" width="4.7" height="4.4" fill="#e9e2da"/><circle cx="187.4" cy="393.5" r="1.9" fill="#ee7a2c"/><path d="M186.8 392.5 l1.6 1 l-1.6 1 z" fill="#fff"/><circle cx="204" cy="393.4" r="3.5" fill="#3f8fd2"/><path d="M200.8 392.6 q3.2 -2 6.4 0 M200.8 394.4 q3.2 1.6 6.4 0" stroke="#d8ecfa" stroke-width="0.6" fill="none"/><circle cx="206.2" cy="395.6" r="1.5" fill="#e6e6e6"/><circle cx="206.2" cy="395.6" r="0.7" fill="#555"/><circle cx="220.8" cy="393.5" r="3.9" fill="#e8722a"/><circle cx="220.6" cy="393" r="2.3" fill="#3868c0"/><path d="M217.2 392 q1.2 3.6 5 4.2 q2.4 -0.8 2.4 -3.6 q-1.4 2.2 -3.6 1.6 q-2.4 -0.4 -3.8 -2.2z" fill="#f0902c"/><circle cx="237.2" cy="393.5" r="3.9" fill="#f2c83a"/><path d="M233.3 393.5 a3.9 3.9 0 0 1 7.3 -1.9 l-3.4 1.9 z" fill="#dc4a38"/><path d="M233.3 393.5 a3.9 3.9 0 0 0 4.6 3.84 l-0.7 -3.84 z" fill="#3fa557"/><circle cx="237.2" cy="393.5" r="1.7" fill="#4a8af4" stroke="#fff" stroke-width="0.5"/><rect x="245.2" y="387" width="16.1" height="13" fill="#3a3b3c"/><rect x="249.4" y="389.8" width="7.4" height="7" fill="#0f2a44" stroke="#4aa0e6" stroke-width="0.7"/><text x="250.80" y="395.20" font-size="4.4" font-family="'Liberation Sans', sans-serif" fill="#56b0f2" font-weight="bold" font-style="normal" textLength="5.00" lengthAdjust="spacingAndGlyphs">Ps</text><rect x="266.2" y="389.8" width="7.4" height="7" fill="#2a1c08" stroke="#e0a040" stroke-width="0.7"/><text x="267.60" y="395.20" font-size="4.4" font-family="'Liberation Sans', sans-serif" fill="#f0b04a" font-weight="bold" font-style="normal" textLength="5.00" lengthAdjust="spacingAndGlyphs">Br</text><ellipse cx="285.4" cy="394.2" rx="3.8" ry="3" fill="#dfe5ec"/><circle cx="283.6" cy="393.6" r="0.8" fill="#d44"/><circle cx="285.6" cy="392.6" r="0.8" fill="#4a4"/><circle cx="286.2" cy="395.4" r="0.8" fill="#46c"/><circle cx="283.8" cy="395.6" r="0.7" fill="#e8c040"/><path d="M287 392.4 l2.6 -3" stroke="#e8a84a" stroke-width="0.9"/><rect x="230" y="399" width="13.6" height="1" fill="#e4dcae"/><rect x="245.2" y="399" width="16.1" height="1" fill="#e8e0b8"/><rect x="263.2" y="399" width="13.8" height="1" fill="#e4dcae"/><rect x="441" y="387" width="74" height="13" fill="#252525"/><text x="447.00" y="394.20" font-size="3.6" font-family="'Liberation Sans', sans-serif" fill="#444" font-weight="normal" font-style="normal" textLength="11.00" lengthAdjust="spacingAndGlyphs">Address</text><text x="477.00" y="394.20" font-size="3.6" font-family="'Liberation Sans', sans-serif" fill="#444" font-weight="normal" font-style="normal" textLength="10.00" lengthAdjust="spacingAndGlyphs">Links</text><text x="447.00" y="398.00" font-size="3.6" font-family="'Liberation Sans', sans-serif" fill="#444" font-weight="normal" font-style="normal" textLength="16.00" lengthAdjust="spacingAndGlyphs">Desktop</text><path d="M558.6 394.4 l1.8 -1.8 l1.8 1.8" stroke="#eee" stroke-width="0.6" fill="none"/><path d="M566.6 394.6 q-0.8 -1.6 1 -1.6 q0.8 -1.4 2 0 q1.4 0.2 0.6 1.6 z" fill="#e0e0e0"/><rect x="573.4" y="391.4" width="5" height="3.4" fill="none" stroke="#eee" stroke-width="0.6"/><rect x="574.8" y="395.2" width="2.2" height="0.7" fill="#eee"/><path d="M581.8 392.8 l1 0 l1.3 -1.2 l0 3.8 l-1.3 -1.2 l-1 0 z" fill="#eee"/><path d="M585 392.6 l1.6 1.8 M586.6 392.6 l-1.6 1.8" stroke="#eee" stroke-width="0.45"/><rect x="590.4" y="391" width="3.6" height="4.6" fill="#ececec"/><circle cx="593.4" cy="395" r="1.1" fill="#3fc058"/><rect x="598" y="391" width="4.8" height="4.6" fill="none" stroke="#eee" stroke-width="0.6"/><rect x="599.2" y="392.6" width="2.4" height="1.6" fill="#eee"/><rect x="605.4" y="391.2" width="8.4" height="4.4" rx="0.5" fill="#d6d6d6"/><path d="M606.4 392.4 l6.4 0 M606.4 393.4 l6.4 0 M607.4 394.5 l4.4 0" stroke="#333" stroke-width="0.4" stroke-dasharray="0.6 0.4"/><text x="618.20" y="392.20" font-size="4.7" font-family="'Liberation Sans', sans-serif" fill="#f6f6f6" font-weight="normal" font-style="normal" textLength="17.00" lengthAdjust="spacingAndGlyphs" stroke="#f6f6f6" stroke-width="0.12">11:05 AM</text><text x="618.20" y="397.80" font-size="4.7" font-family="'Liberation Sans', sans-serif" fill="#f6f6f6" font-weight="normal" font-style="normal" textLength="17.00" lengthAdjust="spacingAndGlyphs" stroke="#f6f6f6" stroke-width="0.12">7/16/2016</text><rect x="638.2" y="387" width="0.5" height="13" fill="#5a5a5a"/></svg></div>
</div>
</body>
</html>
